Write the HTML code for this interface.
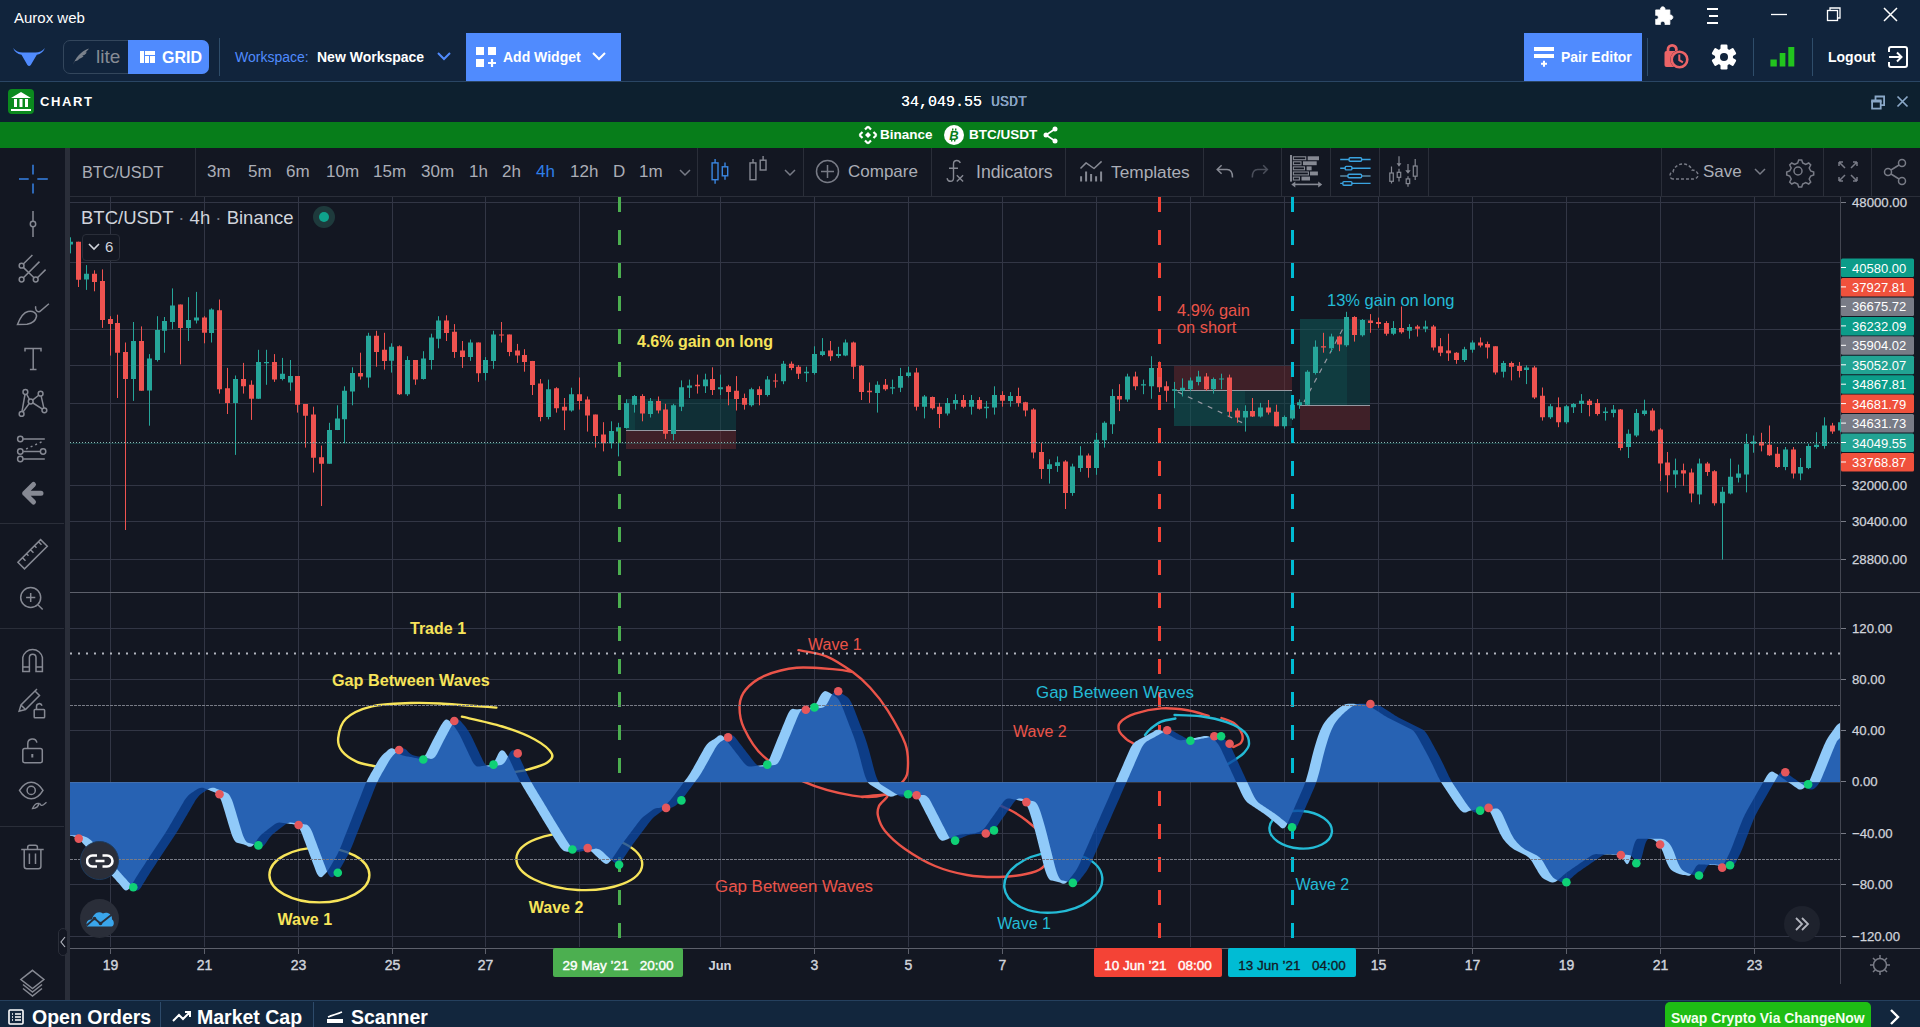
<!DOCTYPE html>
<html><head><meta charset="utf-8"><title>Aurox web</title>
<style>
*{box-sizing:border-box;margin:0;padding:0}
html,body{width:1920px;height:1027px;overflow:hidden;background:#131722;font-family:"Liberation Sans",sans-serif;color:#fff}
.a{position:absolute}
#title{left:0;top:0;width:1920px;height:33px;background:#11243c}
#nav{left:0;top:33px;width:1920px;height:49px;background:#11243c;border-bottom:1px solid #2a4664}
#chd{left:0;top:82px;width:1920px;height:40px;background:#0d202f}
#gbar{left:0;top:122px;width:1920px;height:26px;background:#077d1a}
#tb{left:70px;top:148px;width:1850px;height:49px;background:#131722;border-bottom:1px solid #2a2e39}
#side{left:0;top:148px;width:65px;height:852px;background:#131722}
#sdiv{left:65px;top:148px;width:5px;height:852px;background:#2a2e39}
#bot{left:0;top:1000px;width:1920px;height:27px;background:#12263d;border-top:1px solid #25405e}
.sep{position:absolute;width:1px;background:#2a2e39}
.nsep{position:absolute;width:1px;background:#2f4d6a;top:38px;height:38px}
.tf{position:absolute;top:161px;font-size:17px;color:#abaeb7;line-height:22px}
svg text{font-family:"Liberation Sans",sans-serif}
.ic{position:absolute}
</style></head><body>
<div id="title" class="a"></div>
<div class="a" style="left:14px;top:9px;font-size:15px;color:#fff;line-height:17px">Aurox web</div>
<!-- window icons -->
<svg class="a" style="left:1650px;top:4px" width="270" height="24" viewBox="1650 4 270 24">
 <path d="M1655.7,9.9H1660.6A2.3,2.3 0 1 1 1664.9,9.9H1669.9V15.1A2.3,2.3 0 1 1 1669.9,19.5V24.4H1664.9A2.3,2.3 0 1 0 1660.6,24.4H1655.7V19.2A2,2 0 1 0 1655.7,15.4Z" fill="#fff" stroke="#fff" stroke-width="0.8" stroke-linejoin="round"/>
 <path d="M1707,9h11M1709,16h9M1707,23h11" stroke="#fff" stroke-width="2"/>
 <path d="M1771,14.5h16" stroke="#fff" stroke-width="1.3"/>
 <rect x="1827.5" y="10.5" width="10" height="10" fill="none" stroke="#fff" stroke-width="1.3"/><path d="M1830,10.5v-2.5h10v10h-2.5" fill="none" stroke="#fff" stroke-width="1.3"/>
 <path d="M1884,8l13,13M1897,8l-13,13" stroke="#fff" stroke-width="1.5"/>
</svg>
<div id="nav" class="a"></div>
<!-- logo -->
<svg class="a" style="left:0;top:40px" width="60" height="32" viewBox="0 40 60 32"><path d="M13,48 Q17,52.5 22.5,52.5 L35.5,52.5 Q41,52.5 45,48 Q42.5,53.8 36.8,54.8 L30.8,65 Q29.1,67.2 27.4,65 L21.5,54.8 Q15.5,53.8 13,48Z" fill="#508bfe"/></svg>
<div class="a" style="left:63px;top:40px;width:146px;height:34px;border:1px solid #33465c;border-radius:7px"></div>
<div class="a" style="left:128px;top:40px;width:81px;height:34px;background:#508bfe;border-radius:0 7px 7px 0"></div>
<svg class="a" style="left:60px;top:40px" width="40" height="32" viewBox="60 40 40 32"><path d="M72.8,65 C75.5,58.5 80.5,51.5 88.8,48.6 C88,50.2 86.8,51.4 85.5,52.2 L86.8,52.4 C85.5,54.2 84,55.2 82.2,55.8 L83.6,56.2 C82,57.8 80.2,58.6 78.2,59 L79,59.6 C77.4,60.8 76,61.2 74.6,61.4 C74,62.6 73.4,63.8 72.8,65Z" fill="#7a818b"/></svg>
<div class="a" style="left:96px;top:46px;font-size:19px;color:#868c95;line-height:22px">lite</div>
<svg class="a" style="left:140px;top:51px" width="16" height="12" viewBox="0 0 16 12"><path d="M0,0h4v12h-4z M5,0h10v4h-10z M5,5h4v7h-4z M10,5h5v7h-5z" fill="#fff"/></svg>
<div class="a" style="left:162px;top:47px;font-size:16px;font-weight:bold;color:#fff;line-height:22px">GRID</div>
<div class="nsep" style="left:219px"></div>
<div class="a" style="left:235px;top:49px;font-size:14px;color:#508bfe;line-height:17px">Workspace:</div>
<div class="a" style="left:317px;top:49px;font-size:14px;font-weight:bold;color:#fff;line-height:17px">New Workspace</div>
<svg class="a" style="left:437px;top:51px" width="14" height="10"><path d="M1,2l6,6l6,-6" stroke="#508bfe" stroke-width="2" fill="none"/></svg>
<div class="a" style="left:466px;top:33px;width:155px;height:48px;background:#508bfe"></div>
<svg class="a" style="left:476px;top:47px" width="22" height="22" viewBox="0 0 22 22"><path d="M0,0h8v8h-8z M12,0h8v8h-8z M0,12h8v8h-8z" fill="#fff"/><path d="M16,12v8M12,16h8" stroke="#fff" stroke-width="2.2"/></svg>
<div class="a" style="left:503px;top:49px;font-size:14px;font-weight:bold;color:#fff;line-height:17px">Add Widget</div>
<svg class="a" style="left:592px;top:51px" width="14" height="10"><path d="M1,2l6,6l6,-6" stroke="#fff" stroke-width="2" fill="none"/></svg>
<!-- right nav -->
<div class="a" style="left:1524px;top:33px;width:118px;height:48px;background:#508bfe"></div>
<svg class="a" style="left:1532px;top:45px" width="24" height="24" viewBox="1532 45 24 24"><path d="M1534,47h20v4h-20z M1534,54h20v4h-20z" fill="#fff"/><path d="M1544,60.8v6M1541,63.8h6" stroke="#fff" stroke-width="2"/></svg>
<div class="a" style="left:1561px;top:49px;font-size:14px;font-weight:bold;color:#fff;line-height:17px">Pair Editor</div>
<div class="nsep" style="left:1647px"></div>
<svg class="a" style="left:1660px;top:40px" width="35" height="32" viewBox="1660 40 35 32"><path d="M1668,52v-2.5a4.2,4.2 0 0 1 8.4,0v2.5" stroke="#ec6467" stroke-width="2.8" fill="none"/><rect x="1664.5" y="51" width="14" height="16" rx="2" fill="#ec6467"/><circle cx="1679.5" cy="59.5" r="9.2" fill="#11243c"/><circle cx="1679.5" cy="59.5" r="7.8" fill="none" stroke="#ec6467" stroke-width="2.6"/><path d="M1679.3,54.6v5.6l3.6,2.2" stroke="#ec6467" stroke-width="2" fill="none"/></svg>
<svg class="a" style="left:1711px;top:44px" width="26" height="26" viewBox="-13 -13 26 26"><g fill="#fff"><circle r="9"/><rect x="-3.5" y="-12.5" width="7" height="25" rx="1.2"/><rect x="-3.5" y="-12.5" width="7" height="25" rx="1.2" transform="rotate(60)"/><rect x="-3.5" y="-12.5" width="7" height="25" rx="1.2" transform="rotate(120)"/></g><circle r="4" fill="#11243c"/></svg>
<div class="nsep" style="left:1753px"></div>
<svg class="a" style="left:1770px;top:46px" width="26" height="22" viewBox="1770 46 26 22"><path d="M1770.4,59.5h6.4v7.1h-6.4z M1779.7,53h5.7v13.6h-5.7z M1788.3,47h6v19.6h-6z" fill="#22c41e"/></svg>
<div class="nsep" style="left:1812px"></div>
<div class="a" style="left:1828px;top:49px;font-size:14px;font-weight:bold;color:#fff;line-height:17px">Logout</div>
<svg class="a" style="left:1886px;top:45px" width="24" height="24" viewBox="0 0 24 24"><path d="M3,7v-3a2,2 0 0 1 2,-2h14a2,2 0 0 1 2,2v16a2,2 0 0 1 -2,2h-14a2,2 0 0 1 -2,-2v-3" stroke="#fff" stroke-width="2" fill="none"/><path d="M3,12h12M11,7.5l4.5,4.5l-4.5,4.5" stroke="#fff" stroke-width="2" fill="none"/></svg>

<!-- chart header -->
<div id="chd" class="a"></div>
<svg class="a" style="left:8px;top:89px" width="26" height="25" viewBox="0 0 26 25"><rect width="26" height="25" rx="4" fill="#0b8a1e"/><path d="M3,9 L13,3 L23,9z M3,20h20v2h-20z" fill="#fff"/><path d="M6,10h3v8h-3z M11.5,10h3v8h-3z M17,10h3v8h-3z" fill="#fff"/></svg>
<div class="a" style="left:40px;top:94px;font-size:13px;font-weight:bold;color:#fff;letter-spacing:1.6px;line-height:15px">CHART</div>
<div class="a" style="left:901px;top:95px;font-size:15px;font-family:'Liberation Mono',monospace;color:#ffffff;text-shadow:0 0 0.4px #fff;line-height:16px">34,049.55 <span style="color:#7b9cc4">USDT</span></div>
<svg class="a" style="left:1868px;top:93px" width="46" height="18" viewBox="1868 93 46 18"><rect x="1872.1" y="100.4" width="8.6" height="8.2" fill="none" stroke="#8aa8c8" stroke-width="1.8"/><path d="M1871.2,101.6h10.4" stroke="#8aa8c8" stroke-width="1.8"/><path d="M1875.5,100v-3.5h8.6v8.6h-3.4" fill="none" stroke="#8aa8c8" stroke-width="1.8"/><path d="M1897.5,96.5l10,10M1907.5,96.5l-10,10" stroke="#8aa8c8" stroke-width="1.7"/></svg>
<div id="gbar" class="a"></div>
<svg class="a" style="left:858px;top:125px" width="20" height="20" viewBox="0 0 20 20"><path d="M10,1.5l3,3M10,1.5l-3,3M18.5,10l-3,3M18.5,10l-3,-3M10,18.5l3,-3M10,18.5l-3,-3M1.5,10l3,3M1.5,10l3,-3" stroke="#fff" stroke-width="2.2" fill="none"/><path d="M10,7l3,3l-3,3l-3,-3z" fill="#fff"/></svg>
<div class="a" style="left:880px;top:127px;font-size:13.5px;font-weight:bold;color:#fff;line-height:16px">Binance</div>
<svg class="a" style="left:943px;top:124px" width="22" height="22" viewBox="0 0 22 22"><circle cx="11" cy="11" r="10" fill="#fff"/><text x="11" y="16" text-anchor="middle" font-size="13" font-weight="bold" font-style="italic" fill="#077d1a" font-family="Liberation Sans">B</text><path d="M10,4.5l-0.5,2M13,4.5l-0.5,2M9,15.5l-0.5,2M12,15.5l-0.5,2" stroke="#077d1a" stroke-width="1.3"/></svg>
<div class="a" style="left:969px;top:127px;font-size:13.5px;font-weight:bold;color:#fff;line-height:16px">BTC/USDT</div>
<svg class="a" style="left:1043px;top:126px" width="16" height="18" viewBox="0 0 16 18"><circle cx="12" cy="3" r="2.5" fill="#fff"/><circle cx="3" cy="9" r="2.5" fill="#fff"/><circle cx="12" cy="15" r="2.5" fill="#fff"/><path d="M12,3L3,9L12,15" stroke="#fff" stroke-width="1.6" fill="none"/></svg>

<!-- toolbar -->
<div id="tb" class="a"></div>
<div id="side" class="a"></div>
<div id="sdiv" class="a"></div>
<div class="tf" style="left:82px;font-size:16.3px">BTC/USDT</div>
<div class="sep" style="left:195px;top:148px;height:49px"></div>
<div class="tf" style="left:207px">3m</div>
<div class="tf" style="left:248px">5m</div>
<div class="tf" style="left:286px">6m</div>
<div class="tf" style="left:326px">10m</div>
<div class="tf" style="left:373px">15m</div>
<div class="tf" style="left:421px">30m</div>
<div class="tf" style="left:469px">1h</div>
<div class="tf" style="left:502px">2h</div>
<div class="tf" style="left:536px;color:#2f7fe8">4h</div>
<div class="tf" style="left:570px">12h</div>
<div class="tf" style="left:613px">D</div>
<div class="tf" style="left:639px">1m</div>
<svg class="a" style="left:0;top:148px" width="1920" height="49" viewBox="0 148 1920 49">
 <g fill="none" stroke="#787b86" stroke-width="1.5">
  <path d="M680,170l5,5l5,-5M785,170l5,5l5,-5"/>
 </g>
 <g stroke="#3a86e0" stroke-width="1.4" fill="none"><path d="M715.1,159v4M715.1,179.7v4M725,162.5v4.3M725,175.8v3.9"/><rect x="712.1" y="162.9" width="5.9" height="16.8"/><rect x="722.3" y="166.8" width="5.4" height="9"/></g>
 <g stroke="#868993" stroke-width="1.4" fill="none"><rect x="750" y="162.9" width="5.9" height="16.8"/><path d="M753,159v3.9M763.1,155.9v4.3"/><rect x="760.2" y="160.2" width="5.8" height="9.8"/></g>
 <g stroke="#787b86" stroke-width="1.5" fill="none"><circle cx="827.5" cy="171.5" r="11"/><path d="M827.5,165v13M821,171.5h13"/></g>
 <g stroke="#868993" stroke-width="1.4" fill="none"><path d="M960.3,163.1C959.5,161 958,160.5 956.8,160.5C955,160.5 953.5,161.8 953.5,164V177.9C953.5,180.5 952,181.3 950.4,181.3C948.8,181.3 947.5,180 947,178.2M949,168.3h9M956.8,175.3l6.3,6.3M963.1,175.3l-6.3,6.3"/></g>
 <g stroke="#868993" stroke-width="1.5" fill="none" stroke-linejoin="round"><path d="M1080.5,168.5L1086.1,162.9L1094,168.5L1101.6,161.4"/><path d="M1081.1,176.2v5.2M1086.1,171.4v10M1091.1,174v7.4M1096.1,176.2v5.2M1101.1,171.4v10" stroke-width="2"/></g>
 <g stroke="#868993" stroke-width="1.5" fill="none"><path d="M1221.6,165.2L1217.2,169.5L1221.6,173.7M1217.2,169.5H1227C1230.5,169.5 1232.5,172 1232.5,177.5"/></g>
 <g stroke="#4a4e5a" stroke-width="1.5" fill="none"><path d="M1263.2,165.2L1267.4,169.5L1263.2,173.7M1267.4,169.5H1257.7C1254.3,169.5 1252.3,172 1252.3,177.5"/></g>
 <g fill="#868993"><rect x="1290" y="155" width="2" height="26.6"/><rect x="1307.7" y="156.3" width="11.3" height="3.9"/><rect x="1303" y="161.3" width="13.7" height="3.9"/><rect x="1306.6" y="166.4" width="5" height="3.9"/><rect x="1310" y="171.5" width="7.9" height="3.9"/><rect x="1301.5" y="176.6" width="8.5" height="3.9"/><path d="M1291.3,184.4l4,-3v6z M1322.2,184.4l-4,-3v6z"/></g>
 <g stroke="#868993" stroke-width="1.1" fill="none"><rect x="1293.4" y="156.8" width="12.3" height="2.9"/><rect x="1293.4" y="161.8" width="7.6" height="2.9"/><rect x="1293.4" y="166.9" width="11.1" height="2.9"/><rect x="1293.4" y="172" width="15" height="2.9"/><rect x="1293.4" y="177.1" width="6" height="2.9"/><path d="M1294,184.4h25.5" stroke-width="1.6"/></g>
 <g stroke="#3aa3e0" stroke-width="1.4" fill="none"><path d="M1340.2,159.5h9M1361.6,159.5h9M1340.2,168.2h5M1351.9,168.2h18.7M1340.2,183.4h2.7M1351.9,183.4h18.7"/><path d="M1340.2,176h7.8M1361.6,176h9" stroke="#5a8aa6"/><rect x="1349.1" y="157.8" width="12.5" height="3.5" rx="1"/><rect x="1345.2" y="166.4" width="6.7" height="3.5" rx="1"/><rect x="1348" y="174.2" width="13.6" height="3.5" rx="1"/><rect x="1342.9" y="181.6" width="9" height="3.6" rx="1"/></g>
 <g stroke="#868993" stroke-width="1.2" fill="none"><path d="M1391.5,166.4v6.6M1391.5,181.3v2.3M1399,168.8v3.5M1399,177.3v4.3M1408,176.2v2.7M1408,183.6v3.1M1415.2,159v7M1415.2,176.2v3.8M1399,156.3v7.5M1408,164v6.8"/><rect x="1389.8" y="173" width="3.5" height="8.3"/><rect x="1397.2" y="172.3" width="3.5" height="5"/><rect x="1406.2" y="178.9" width="3.5" height="4.7"/><rect x="1413.3" y="166" width="3.8" height="10.2"/></g>
 <path d="M1396.6,163.3h4.8l-2.4,3.5z M1405.3,170.3h5.4l-2.7,3.5z" fill="#868993"/>
 <g stroke="#787b86" stroke-width="1.5" fill="none" stroke-dasharray="3 2"><path d="M1673,179c-4,0 -4,-7 0,-7c1,-5 5,-8 10,-8c5,0 8,3 9,6c4,0 6,3 6,5c0,3 -3,4 -5,4h-20z"/></g>
 <g stroke="#787b86" stroke-width="1.5" fill="none"><path d="M1755,169l5,5l5,-5"/></g>
 <g stroke="#787b86" stroke-width="1.5" fill="none"><circle cx="1798" cy="171" r="4"/><path d="M1798,160.5l2.5,0l1,3l3,1.5l3,-1.5l2,2l-1.5,3l1.5,3l3,1l0,3l-3,1l-1.5,3l1.5,3l-2,2l-3,-1.5l-3,1.5l-1,3h-3l-1,-3l-3,-1.5l-3,1.5l-2,-2l1.5,-3l-1.5,-3l-3,-1v-3l3,-1l1.5,-3l-1.5,-3l2,-2l3,1.5l3,-1.5l1,-3z" transform="translate(1.2 -0.5)"/></g>
 <g stroke="#787b86" stroke-width="1.5" fill="none"><path d="M1839,162l6,6M1839,162h4M1839,162v4M1857,162l-6,6M1857,162h-4M1857,162v4M1839,181l6,-6M1839,181h4M1839,181v-4M1857,181l-6,-6M1857,181h-4M1857,181v-4"/></g>
 <g stroke="#787b86" stroke-width="1.5" fill="none"><circle cx="1902" cy="163" r="3.5"/><circle cx="1888" cy="172" r="3.5"/><circle cx="1902" cy="181" r="3.5"/><path d="M1899,165l-8,5M1899,179l-8,-5"/></g>
</svg>
<div class="tf" style="left:848px">Compare</div>
<div class="tf" style="left:976px;font-size:17.7px">Indicators</div>
<div class="tf" style="left:1111px;font-size:17.3px">Templates</div>
<div class="tf" style="left:1703px">Save</div>
<div class="sep" style="left:697px;top:148px;height:49px"></div>
<div class="sep" style="left:803px;top:148px;height:49px"></div>
<div class="sep" style="left:931px;top:148px;height:49px"></div>
<div class="sep" style="left:1065px;top:148px;height:49px"></div>
<div class="sep" style="left:1203px;top:148px;height:49px"></div>
<div class="sep" style="left:1281px;top:148px;height:49px"></div>
<div class="sep" style="left:1330px;top:148px;height:49px"></div>
<div class="sep" style="left:1379px;top:148px;height:49px"></div>
<div class="sep" style="left:1428px;top:148px;height:49px"></div>
<div class="sep" style="left:1661px;top:148px;height:49px"></div>
<div class="sep" style="left:1774px;top:148px;height:49px"></div>
<div class="sep" style="left:1823px;top:148px;height:49px"></div>
<div class="sep" style="left:1871px;top:148px;height:49px"></div>

<!-- chart svg -->
<svg class="a" style="left:0;top:0" width="1920" height="1000" viewBox="0 0 1920 1000">
<defs><clipPath id="cp"><rect x="70" y="197" width="1850" height="803"/></clipPath></defs>
<g clip-path="url(#cp)">
<line x1="110.5" y1="197" x2="110.5" y2="947" stroke="#323645" stroke-width="1"/>
<line x1="204.5" y1="197" x2="204.5" y2="947" stroke="#323645" stroke-width="1"/>
<line x1="298.5" y1="197" x2="298.5" y2="947" stroke="#323645" stroke-width="1"/>
<line x1="392.5" y1="197" x2="392.5" y2="947" stroke="#323645" stroke-width="1"/>
<line x1="485.5" y1="197" x2="485.5" y2="947" stroke="#323645" stroke-width="1"/>
<line x1="579.5" y1="197" x2="579.5" y2="947" stroke="#323645" stroke-width="1"/>
<line x1="720.5" y1="197" x2="720.5" y2="947" stroke="#323645" stroke-width="1"/>
<line x1="814.5" y1="197" x2="814.5" y2="947" stroke="#323645" stroke-width="1"/>
<line x1="908.5" y1="197" x2="908.5" y2="947" stroke="#323645" stroke-width="1"/>
<line x1="1002.5" y1="197" x2="1002.5" y2="947" stroke="#323645" stroke-width="1"/>
<line x1="1096.5" y1="197" x2="1096.5" y2="947" stroke="#323645" stroke-width="1"/>
<line x1="1190.5" y1="197" x2="1190.5" y2="947" stroke="#323645" stroke-width="1"/>
<line x1="1284.5" y1="197" x2="1284.5" y2="947" stroke="#323645" stroke-width="1"/>
<line x1="1378.5" y1="197" x2="1378.5" y2="947" stroke="#323645" stroke-width="1"/>
<line x1="1472.5" y1="197" x2="1472.5" y2="947" stroke="#323645" stroke-width="1"/>
<line x1="1566.5" y1="197" x2="1566.5" y2="947" stroke="#323645" stroke-width="1"/>
<line x1="1660.5" y1="197" x2="1660.5" y2="947" stroke="#323645" stroke-width="1"/>
<line x1="1754.5" y1="197" x2="1754.5" y2="947" stroke="#323645" stroke-width="1"/>
<line x1="70" y1="202.5" x2="1840" y2="202.5" stroke="#323645" stroke-width="1"/>
<line x1="70" y1="262.5" x2="1840" y2="262.5" stroke="#323645" stroke-width="1"/>
<line x1="70" y1="329.5" x2="1840" y2="329.5" stroke="#323645" stroke-width="1"/>
<line x1="70" y1="365.5" x2="1840" y2="365.5" stroke="#323645" stroke-width="1"/>
<line x1="70" y1="403.5" x2="1840" y2="403.5" stroke="#323645" stroke-width="1"/>
<line x1="70" y1="485.5" x2="1840" y2="485.5" stroke="#323645" stroke-width="1"/>
<line x1="70" y1="521.5" x2="1840" y2="521.5" stroke="#323645" stroke-width="1"/>
<line x1="70" y1="559.5" x2="1840" y2="559.5" stroke="#323645" stroke-width="1"/>
<line x1="70" y1="628.5" x2="1840" y2="628.5" stroke="#323645" stroke-width="1"/>
<line x1="70" y1="679.5" x2="1840" y2="679.5" stroke="#323645" stroke-width="1"/>
<line x1="70" y1="730.5" x2="1840" y2="730.5" stroke="#323645" stroke-width="1"/>
<line x1="70" y1="833.5" x2="1840" y2="833.5" stroke="#323645" stroke-width="1"/>
<line x1="70" y1="884.5" x2="1840" y2="884.5" stroke="#323645" stroke-width="1"/>
<line x1="70" y1="936.5" x2="1840" y2="936.5" stroke="#323645" stroke-width="1"/>
<line x1="70" y1="592.5" x2="1920" y2="592.5" stroke="#5d606b" stroke-width="1"/>
<line x1="1840.5" y1="197" x2="1840.5" y2="984" stroke="#434651" stroke-width="1"/>
<line x1="70" y1="948.5" x2="1920" y2="948.5" stroke="#5d606b" stroke-width="1"/>
<rect x="626" y="399" width="110" height="31" fill="#0d474a" fill-opacity="0.5"/>
<rect x="626" y="399" width="9" height="31" fill="#0f9d8a" fill-opacity="0.12"/>
<rect x="626" y="431" width="110" height="18" fill="#6b292e" fill-opacity="0.5"/>
<line x1="626" y1="430.5" x2="736" y2="430.5" stroke="#9598a1" stroke-width="1"/>
<rect x="1174" y="366" width="118" height="24" fill="#6b292e" fill-opacity="0.5"/>
<rect x="1174" y="391" width="118" height="35" fill="#0d474a" fill-opacity="0.5"/>
<rect x="1174" y="391" width="71" height="35" fill="#0f9d8a" fill-opacity="0.12"/>
<line x1="1174" y1="390.5" x2="1292" y2="390.5" stroke="#9598a1" stroke-width="1"/>
<line x1="1178" y1="392" x2="1245" y2="424" stroke="#9598a1" stroke-width="1.2" stroke-dasharray="5 6"/>
<rect x="1300" y="319" width="70" height="86" fill="#0d474a" fill-opacity="0.5"/>
<rect x="1300" y="319" width="47" height="86" fill="#0f9d8a" fill-opacity="0.12"/>
<rect x="1300" y="406" width="70" height="24" fill="#6b292e" fill-opacity="0.5"/>
<line x1="1300" y1="405.5" x2="1370" y2="405.5" stroke="#9598a1" stroke-width="1"/>
<line x1="1304" y1="402" x2="1347" y2="321" stroke="#9598a1" stroke-width="1.2" stroke-dasharray="5 6"/>
<path d="M70.5,237.3V253.4M86.5,265.1V289.9M133.5,322V400.9M149.5,354.1V425.7M157.5,316.2V361.5M164.5,317V352.7M172.5,288.4V329.3M188.5,297.2V341M196.5,291.9V323.5M211.5,308.3V342.5M235.5,375.5V454.9M258.5,349.8V398.8M266.5,349.8V384.8M282.5,357.9V380.4M290.5,360V390.7M329.5,422.8V463.7M337.5,405.3V430.1M344.5,386.3V443.2M352.5,367.3V405.3M368.5,332.8V387.7M391.5,343.3V372.6M407.5,356.2V395.9M423.5,351.2V379.6M431.5,333.7V369.6M438.5,316.2V348.3M470.5,339.5V360.9M485.5,357.1V380.4M493.5,330.8V368.8M548.5,379.6V419.3M571.5,387.7V411.7M611.5,421.3V448.5M618.5,422.8V456.4M626.5,399.4V428.6M634.5,395V412.6M650.5,398V417.5M673.5,403.8V440.3M681.5,380.4V411.1M689.5,379.6V398M705.5,373.7V393M720.5,374.6V395M751.5,387.7V406.7M767.5,376.1V396.5M783.5,360.9V384.2M806.5,366.7V381.9M814.5,346.3V374.6M822.5,338.1V356.2M838.5,346.8V357.9M845.5,339.5V356.2M877.5,381.3V412.6M892.5,379.6V394.2M900.5,367.9V392.1M908.5,366.7V377.5M924.5,395V418.4M947.5,398V415.5M955.5,394.2V409.6M971.5,395V414.6M986.5,400.9V418.4M994.5,386.3V414.6M1010.5,392.1V406.7M1049.5,459.3V483.6M1057.5,456.4V471.9M1072.5,463.7V495.8M1080.5,446.2V471.9M1096.5,433V474.8M1104.5,421.3V447.6M1112.5,389.2V433.9M1127.5,373.7V401.8M1143.5,379.6V394.2M1151.5,356.2V398.8M1174.5,381.9V408.2M1182.5,378.4V396.5M1190.5,377.5V391.2M1198.5,370.8V385.4M1213.5,377.5V393.6M1221.5,373.7V389.2M1245.5,405.3V431.6M1260.5,402.9V417.5M1284.5,415.5V428.6M1292.5,402.3V419.9M1299.5,399.4V408.8M1307.5,370.2V405.3M1315.5,340.4V374.6M1331.5,333.7V352.1M1346.5,311.8V346.8M1362.5,319.1V336.6M1393.5,321.1V335.2M1409.5,324.1V338.7M1425.5,320.6V332.2M1464.5,346.8V362M1472.5,340.4V352.7M1503.5,360.9V377.5M1526.5,365.3V384.1M1550.5,404V418.9M1566.5,405V423.9M1573.5,403V413M1581.5,394.1V413M1605.5,407.3V420.6M1613.5,405V417.3M1628.5,429.5V458M1636.5,409V437.1M1644.5,399.7V415.6M1675.5,458.6V487.8M1699.5,458.6V504.3M1722.5,486.8V559.6M1730.5,458.6V494.4M1738.5,464.6V482.5M1746.5,433.8V492.4M1753.5,435.5V452.7M1785.5,447V470.2M1800.5,458V480.2M1808.5,443.7V469.2M1816.5,432.2V448.7M1824.5,417.3V448.7M1840.5,418.9V432.2" stroke="#26a69a" stroke-width="1" fill="none"/>
<path d="M68,241.7h5v2.9h-5zM84,273.8h5v5.8h-5zM131,341h5v38h-5zM147,358.5h5v32.1h-5zM155,329.9h5v30.1h-5zM162,321.1h5v9.6h-5zM170,305.4h5v16.7h-5zM186,320h5v7.9h-5zM194,317.6h5v2.9h-5zM209,309.5h5v23.4h-5zM233,379h5v24h-5zM256,362h5v36.8h-5zM264,362h5v1.2h-5zM280,373.7h5v5.3h-5zM288,376.1h5v6.4h-5zM327,430.1h5v33.6h-5zM335,418.4h5v11.7h-5zM342,390.7h5v28.6h-5zM350,373.1h5v18.4h-5zM366,335.7h5v41.8h-5zM389,346.8h5v14h-5zM405,360h5v34.2h-5zM421,358.5h5v20.4h-5zM429,337.5h5v22.5h-5zM436,320.6h5v18.1h-5zM468,342.5h5v14.6h-5zM483,360h5v13.1h-5zM491,334.6h5v26.3h-5zM546,389.2h5v27.8h-5zM569,394.2h5v16.4h-5zM609,431h5v12.3h-5zM616,427.2h5v4.4h-5zM624,402.9h5v25.1h-5zM632,395.9h5v8.8h-5zM648,400.9h5v13.1h-5zM671,405.3h5v28.6h-5zM679,387.2h5v19.6h-5zM687,385.4h5v2.3h-5zM703,379.6h5v6.7h-5zM718,387.2h5v2h-5zM749,389.2h5v16.1h-5zM765,379.6h5v15.5h-5zM781,363.8h5v17.5h-5zM804,371.7h5v1.5h-5zM812,354.1h5v19h-5zM820,351.2h5v3.8h-5zM836,354.1h5v2h-5zM843,342.5h5v13.1h-5zM875,384.8h5v8.2h-5zM890,387.2h5v1.2h-5zM898,376.1h5v11.7h-5zM906,372.6h5v3.5h-5zM922,396.5h5v10.2h-5zM945,402.9h5v10.5h-5zM953,400h5v3.8h-5zM969,400h5v6.7h-5zM984,406.7h5v1.5h-5zM992,395h5v12.6h-5zM1008,395.9h5v5h-5zM1047,464.3h5v4.7h-5zM1055,462.2h5v3.8h-5zM1070,466.6h5v26.3h-5zM1078,455.5h5v12.6h-5zM1094,439.7h5v28.3h-5zM1102,422.8h5v17.5h-5zM1110,395.9h5v28.3h-5zM1125,376.6h5v22.8h-5zM1141,384.2h5v1.2h-5zM1149,367.9h5v18.4h-5zM1172,389.2h5v1.5h-5zM1180,387.7h5v2.9h-5zM1188,380.4h5v8.8h-5zM1196,376.6h5v5.3h-5zM1211,379h5v10.2h-5zM1219,378.4h5v1.2h-5zM1243,411.1h5v6.4h-5zM1258,407.6h5v8.8h-5zM1282,417h5v9.3h-5zM1290,404.7h5v13.7h-5zM1297,402.3h5v2.9h-5zM1305,371.7h5v33h-5zM1313,346.8h5v26.3h-5zM1329,336.6h5v11.7h-5zM1344,317h5v28.3h-5zM1360,320h5v15.2h-5zM1391,327.9h5v5.8h-5zM1407,327h5v3.8h-5zM1423,326.4h5v2.3h-5zM1462,349.2h5v10.8h-5zM1470,342.5h5v7.3h-5zM1501,362.9h5v8.8h-5zM1524,367.6h5v2.3h-5zM1548,406.3h5v10.9h-5zM1564,406.3h5v15.9h-5zM1571,404h5v3.3h-5zM1579,400.7h5v3.3h-5zM1603,411.6h5v1.3h-5zM1611,409.6h5v3.3h-5zM1626,433.8h5v13.2h-5zM1634,413h5v22.5h-5zM1642,410.6h5v3.3h-5zM1673,470.2h5v4.3h-5zM1697,463.6h5v30.8h-5zM1720,491.7h5v11.6h-5zM1728,476.8h5v16.6h-5zM1736,473.5h5v4.3h-5zM1744,443.7h5v30.8h-5zM1751,441.4h5v2.3h-5zM1783,449.4h5v17.5h-5zM1798,466.9h5v6.6h-5zM1806,446.1h5v21.9h-5zM1814,444.7h5v2.3h-5zM1822,425.5h5v20.5h-5zM1838,422.2h5v8.3h-5z" fill="#26a69a"/>
<path d="M78.5,241.7V287M94.5,270.3V291.3M102.5,269.4V327.9M110.5,316.2V355.6M117.5,314.7V398M125.5,342.5V530M141.5,326.4V390.7M180.5,304.5V364.4M204.5,316.2V343.3M219.5,299.5V393.6M227.5,367.9V414M243.5,362.9V393.6M251.5,380.4V419.9M274.5,354.1V381.9M297.5,376.1V412.6M305.5,404.1V447.6M313.5,406.7V472.5M321.5,445.6V506M360.5,352.7V379.6M376.5,330.8V366.7M384.5,332.8V369.6M399.5,345.4V395M415.5,360V384.8M446.5,315.3V341M454.5,324.1V357.9M462.5,341V367.9M478.5,342.5V381.9M501.5,322V342.5M509.5,334.6V356.2M517.5,343.9V362.9M524.5,349.2V371.7M532.5,360.9V395M540.5,379V421.3M556.5,387.2V412.6M564.5,398V430.1M579.5,377.5V409.6M587.5,396.5V431.6M595.5,414.6V447.6M603.5,422.2V451.4M642.5,394.2V421.3M658.5,396.5V413.4M665.5,403.8V438.9M697.5,374.6V393.6M712.5,367.3V395M728.5,384.8V405.3M736.5,376.1V410.5M744.5,393.6V409.6M759.5,386.3V405.3M775.5,373.7V387.7M791.5,361.5V370.2M798.5,365V379M830.5,341V360.9M853.5,341.6V379M861.5,365V400M869.5,382.5V402.9M885.5,379V390.7M916.5,367.9V410.5M932.5,396.5V409.6M939.5,402.9V428.1M963.5,395V408.2M979.5,397.1V409.6M1002.5,391.2V406.7M1018.5,387.7V406.7M1025.5,401.8V416.4M1033.5,408.2V458.4M1041.5,442.7V478.9M1065.5,460.2V509M1088.5,453.5V477.7M1119.5,384.2V411.1M1135.5,371.7V390.1M1159.5,361.5V392.1M1166.5,381.3V401.8M1206.5,373.1V390.7M1229.5,374.6V417M1237.5,408.2V422.8M1252.5,398V417M1268.5,400V414.6M1276.5,404.7V426.3M1323.5,332.8V352.7M1339.5,335.7V351.2M1354.5,316.2V341.6M1370.5,314.1V332.8M1378.5,317.6V327.9M1386.5,321.1V335.7M1401.5,306.5V333.7M1417.5,324.9V336.6M1433.5,324.9V350.4M1440.5,338.1V356.2M1448.5,333.7V360.9M1456.5,352.1V363.8M1480.5,337.5V347.4M1487.5,341.6V358.5M1495.5,346.3V374.6M1511.5,361.5V380.4M1519.5,362V377.5M1534.5,365.9V399M1542.5,387.5V420.6M1558.5,397.4V427.2M1589.5,399V416.3M1597.5,399V415.6M1620.5,409V450.4M1652.5,408.3V431.5M1660.5,428.2V481.1M1667.5,452V492.4M1683.5,463.6V485.8M1691.5,468.6V502.3M1707.5,461.9V475.9M1714.5,470.2V505.6M1761.5,432.8V451.4M1769.5,425.5V456M1777.5,447V467.9M1793.5,447V478.5M1832.5,422.9V433.8" stroke="#ef5350" stroke-width="1" fill="none"/>
<path d="M76,241.7h5v38h-5zM92,273.8h5v8.2h-5zM100,281.1h5v38.9h-5zM108,319.1h5v5h-5zM115,322.9h5v29.8h-5zM123,352.1h5v26.9h-5zM139,341h5v49.7h-5zM178,304.5h5v23.4h-5zM202,317.6h5v15.2h-5zM217,310.3h5v78.9h-5zM225,388.3h5v14.6h-5zM241,379h5v7.3h-5zM249,384.8h5v14h-5zM272,362h5v17.5h-5zM295,376.1h5v28.6h-5zM303,404.1h5v11.7h-5zM311,414.6h5v43.2h-5zM319,457.3h5v6.4h-5zM358,373.1h5v3.5h-5zM374,335.7h5v16.4h-5zM382,349.8h5v11.1h-5zM397,346.3h5v47.9h-5zM413,360h5v19.6h-5zM444,320.6h5v12.3h-5zM452,331.7h5v20.4h-5zM460,350.6h5v6.4h-5zM476,342.5h5v30.7h-5zM499,334.6h5v1h-5zM507,334.6h5v17.5h-5zM515,350.6h5v5h-5zM522,355h5v7h-5zM530,360.9h5v24h-5zM538,383.4h5v33.6h-5zM554,388.3h5v19.9h-5zM562,406.7h5v3.8h-5zM577,394.2h5v6.7h-5zM585,399.4h5v16.1h-5zM593,414.6h5v21.3h-5zM601,434.5h5v8.8h-5zM640,395.9h5v17.5h-5zM656,400.9h5v9.6h-5zM663,409.6h5v24.2h-5zM695,384.8h5v1.5h-5zM710,379h5v11.1h-5zM726,386.3h5v5.8h-5zM734,390.7h5v8.2h-5zM742,398h5v6.7h-5zM757,389.2h5v5.8h-5zM773,380.4h5v1h-5zM789,363.8h5v4.1h-5zM796,366.7h5v7h-5zM828,350.4h5v5.8h-5zM851,342.5h5v24.2h-5zM859,365.8h5v26.3h-5zM867,390.7h5v1.5h-5zM883,384.8h5v4.4h-5zM914,372.6h5v34.2h-5zM930,397.1h5v11.1h-5zM937,406.7h5v7.3h-5zM961,400h5v6.7h-5zM977,400h5v8.8h-5zM1000,395h5v5.8h-5zM1016,395.9h5v7h-5zM1023,402.3h5v8.2h-5zM1031,409.6h5v42.9h-5zM1039,452h5v16.9h-5zM1063,461.4h5v31.5h-5zM1086,455.5h5v12.6h-5zM1117,395.9h5v3.5h-5zM1133,376.6h5v9.6h-5zM1157,367.9h5v19.3h-5zM1164,386.3h5v4.4h-5zM1204,376.6h5v12.6h-5zM1227,377.5h5v34.2h-5zM1235,410.5h5v7h-5zM1250,411.1h5v5.3h-5zM1266,407.6h5v5h-5zM1274,411.7h5v14.6h-5zM1321,346.3h5v1.2h-5zM1337,336.6h5v7.9h-5zM1352,317h5v18.1h-5zM1368,320.6h5v2.3h-5zM1376,322h5v2h-5zM1384,322.9h5v10.8h-5zM1399,328.1h5v4.1h-5zM1415,326.4h5v2.3h-5zM1431,326.4h5v21h-5zM1438,346.3h5v6.4h-5zM1446,350.4h5v2.9h-5zM1454,352.7h5v7.3h-5zM1478,342.5h5v2.9h-5zM1485,343.9h5v3.5h-5zM1493,346.3h5v26.3h-5zM1509,362.9h5v3.8h-5zM1517,365.9h5v5h-5zM1532,367.6h5v29.8h-5zM1540,395.7h5v21.5h-5zM1556,407.3h5v14.9h-5zM1587,400.7h5v4.3h-5zM1595,403h5v10.9h-5zM1618,409.6h5v38.4h-5zM1650,410.6h5v19.9h-5zM1658,429.5h5v34.1h-5zM1665,462.6h5v12.6h-5zM1681,470.2h5v3.3h-5zM1689,472.5h5v20.9h-5zM1705,463.6h5v8.3h-5zM1712,471.2h5v32.1h-5zM1759,442.1h5v3.3h-5zM1767,444.7h5v10.6h-5zM1775,453.7h5v13.2h-5zM1791,449.4h5v24.2h-5zM1830,425.5h5v6h-5z" fill="#ef5350"/>
<line x1="70" y1="443.5" x2="1840" y2="443.5" stroke="#26a69a" stroke-opacity="0.25" stroke-width="1"/>
<line x1="70" y1="442.5" x2="1840" y2="442.5" stroke="#8fb8b4" stroke-width="1" stroke-dasharray="1 2"/>
<line x1="619.5" y1="197" x2="619.5" y2="947" stroke="#4caf50" stroke-width="3" stroke-dasharray="15 18"/>
<line x1="1159.5" y1="197" x2="1159.5" y2="947" stroke="#f44336" stroke-width="3" stroke-dasharray="15 18"/>
<line x1="1292.5" y1="197" x2="1292.5" y2="947" stroke="#00bcd4" stroke-width="3" stroke-dasharray="15 18"/>
<ellipse cx="319.4" cy="875" rx="50" ry="27.4" fill="none" stroke="#f7e45a" stroke-width="2.4" transform="rotate(0 319.4 875)"/>
<ellipse cx="579.3" cy="861.5" rx="63" ry="28.5" fill="none" stroke="#f7e45a" stroke-width="2.4" transform="rotate(3 579.3 861.5)"/>
<path d="M496.4,707.6C487,706.9 454.2,704.3 440,703.5C425.8,702.7 422.4,702.5 411.1,703C399.8,703.5 382.9,703.7 372,706.3C361.1,708.9 351.6,713.3 346,718.6C340.4,723.9 338.8,732.8 338.2,738.2C337.6,743.6 339.1,747.3 342.1,751.2C345.2,755.1 351.6,759.2 356.5,761.6C361.4,764 366.6,764.4 371.4,765.5C376.1,766.6 382.7,767.6 385,768" fill="none" stroke="#f7e45a" stroke-width="2.4" stroke-linecap="round"/>
<path d="M461.9,716.7C468.6,718.3 490.2,722.7 502.3,726.5C514.5,730.3 526.5,735 534.8,739.5C543,744 549.8,749.9 551.8,753.8C553.8,757.7 550.5,760.3 546.6,762.9C542.7,765.5 533.6,767.9 528.3,769.4C523,770.9 517.2,771.6 515,772" fill="none" stroke="#f7e45a" stroke-width="2.4" stroke-linecap="round"/>
<path d="M798.4,650.2C803.1,651.2 817.3,652.6 826.4,656.3C835.5,659.9 845.4,666.9 852.7,672.1C860,677.4 864.4,681.4 870.2,687.8C876.1,694.2 881.9,701.2 887.8,710.6C893.6,720 901.9,734.5 905.3,743.9C908.6,753.2 908.2,760.6 907.9,766.7C907.6,772.8 907.5,776 903.5,780.7C899.5,785.4 892.7,792.3 884.2,794.8C875.7,797.3 866.1,797.8 852.7,795.6C839.3,793.4 818.5,788.2 803.6,781.6C788.7,775 773.2,765.1 763.3,756.2C753.4,747.3 748,736.7 744,728.2C740,719.7 739.3,711.8 739.6,705.4C739.9,699 741.5,694.6 745.8,689.6C750,684.6 756.6,679.2 765.1,675.6C773.6,672 784.9,668.7 796.6,667.7C808.3,666.7 825.9,668.7 835.2,669.4C844.6,670.1 849.8,671.6 852.7,672.1" fill="none" stroke="#eb5449" stroke-width="2.4" stroke-linecap="round"/>
<path d="M862,797C866.2,796.7 884.2,793.5 887,795C889.8,796.5 880.5,802.5 879,806C877.5,809.5 877,811.8 878,816C879,820.2 880.5,825.5 885,831C889.5,836.5 896.7,843.2 905,849C913.3,854.8 924.7,861.7 935,866C945.3,870.3 956.3,873.2 967,875C977.7,876.8 989.2,877.2 999,877C1008.8,876.8 1018.8,875.5 1026,874C1033.2,872.5 1038,871.2 1042,868C1046,864.8 1049.5,860 1050,855C1050.5,850 1048.8,843.7 1045,838C1041.2,832.3 1032.8,825.7 1027,821C1021.2,816.3 1017,813.5 1010,810C1003,806.5 995,803 985,800C975,797 962.5,793.5 950,792C937.5,790.5 920.5,790.5 910,791C899.5,791.5 890.8,794.3 887,795" fill="none" stroke="#eb5449" stroke-width="2.4" stroke-linecap="round"/>
<path d="M1208.7,715.9C1205.2,715 1195.5,711.5 1187.6,710.2C1179.7,709 1170,707.8 1161.3,708.4C1152.5,709 1141.9,711.4 1135.1,713.7C1128.2,716 1122.8,719.5 1120.2,722.4C1117.6,725.3 1118.3,728.4 1119.3,731.2C1120.3,734 1124,737.1 1126.3,739.1C1128.6,741.1 1131,742 1133.3,743.5C1135.6,745 1138.9,747.2 1140,748" fill="none" stroke="#eb5449" stroke-width="2.4" stroke-linecap="round"/>
<path d="M1221.4,718C1223.5,718.9 1230.7,720.7 1234.1,723.3C1237.5,725.9 1240.8,730.6 1242,733.8C1243.2,737 1242.6,740.4 1241.1,742.6C1239.6,744.8 1234.5,746.3 1233.2,747" fill="none" stroke="#eb5449" stroke-width="2.4" stroke-linecap="round"/>
<path d="M1174.5,715C1178.9,715.2 1192,715.1 1200.8,716.3C1209.6,717.5 1219.8,719.8 1227.1,722.4C1234.4,725 1240.9,728.5 1244.6,732.1C1248.2,735.8 1249.2,740.8 1249,744.3C1248.8,747.8 1245.9,750.6 1243.7,753.1C1241.5,755.6 1238.4,757.4 1235.8,759.2C1233.2,761 1229.3,763.2 1228,764" fill="none" stroke="#24bbd6" stroke-width="2.4" stroke-linecap="round"/>
<path d="M1175.4,718.5C1173.1,719 1165.4,719.9 1161.3,721.6C1157.2,723.3 1153.5,726.4 1150.8,728.6C1148.1,730.8 1146,733.9 1145,735" fill="none" stroke="#24bbd6" stroke-width="2.4" stroke-linecap="round"/>
<ellipse cx="1053.3" cy="882.5" rx="49.2" ry="30" fill="none" stroke="#24bbd6" stroke-width="2.4" transform="rotate(-6 1053.3 882.5)"/>
<ellipse cx="1300.7" cy="829.7" rx="31.3" ry="18.8" fill="none" stroke="#24bbd6" stroke-width="2.4" transform="rotate(4 1300.7 829.7)"/>
<path d="M70,782L70,835.7L71,835.9L72,836.1L73,836.3L74,836.7L75,837.1L76,837.6L77,838.1L78,838.7L79,839.5L80,840.3L81,841.2L82,842.3L83,843.4L84,844.5L85,845.6L86,846.8L87,847.9L88,849L89,850.1L90,851.2L91,852.3L92,853.5L93,854.6L94,855.7L95,856.8L96,857.9L97,859L98,860.2L99,861.3L100,862.4L101,863.5L102,864.6L103,865.7L104,866.9L105,868L106,869.1L107,870.2L108,871.3L109,872.4L110,873.6L111,874.7L112,875.8L113,876.9L114,878L115,879.1L116,880.3L117,881.4L118,882.5L119,883.6L120,884.8L121,885.9L122,887.2L123,888.4L124,889.5L125,890.2L126,890.5L127,890.3L128,889.8L129,888.8L130,887.4L131,885.8L132,884.1L133,882.5L134,880.9L135,879.2L136,877.6L137,876L138,874.4L139,872.8L140,871.2L141,869.7L142,868.2L143,866.7L144,865.2L145,863.7L146,862.1L147,860.6L148,859.1L149,857.6L150,856.1L151,854.6L152,853.1L153,851.6L154,850.1L155,848.6L156,847.1L157,845.6L158,844.1L159,842.6L160,841L161,839.5L162,838L163,836.5L164,835L165,833.4L166,831.8L167,830.2L168,828.5L169,826.9L170,825.1L171,823.4L172,821.7L173,820L174,818.3L175,816.6L176,814.9L177,813.1L178,811.4L179,809.7L180,808L181,806.3L182,804.6L183,802.9L184,801.1L185,799.6L186,798.2L187,796.9L188,795.8L189,794.8L190,794L191,793.3L192,792.6L193,792L194,791.3L195,790.6L196,790L197,789.3L198,788.7L199,788.2L200,787.9L201,787.7L202,787.7L203,787.8L204,788.1L205,788.5L206,788.9L207,789.3L208,789.7L209,790.1L210,790.5L211,790.9L212,791.3L213,791.7L214,792.1L215,792.5L216,792.9L217,793.5L218,794.5L219,796L220,797.9L221,800.1L222,802.8L223,806L224,809.3L225,812.6L226,816L227,819.3L228,822.7L229,826L230,829.3L231,832.6L232,835.4L233,837.7L234,839.7L235,841.2L236,842.2L237,842.8L238,843L239,843.3L240,843.5L241,843.8L242,844L243,844.3L244,844.5L245,844.9L246,845.3L247,845.8L248,846.4L249,846.7L250,846.8L251,846.7L252,846.2L253,845.5L254,844.3L255,842.9L256,841.4L257,840L258,838.6L259,837.3L260,836.1L261,835.1L262,834.1L263,833.2L264,832.4L265,831.6L266,830.9L267,830.1L268,829.3L269,828.6L270,827.8L271,827.1L272,826.3L273,825.5L274,824.8L275,824.1L276,823.5L277,823.1L278,822.8L279,822.6L280,822.6L281,822.7L282,822.8L283,822.9L284,823.1L285,823.2L286,823.3L287,823.5L288,823.6L289,823.7L290,823.9L291,824L292,824.1L293,824.3L294,824.4L295,824.5L296,824.8L297,825.4L298,826.4L299,827.8L300,829.5L301,831.6L302,834.1L303,836.8L304,839.4L305,842.1L306,844.8L307,847.4L308,850.1L309,852.8L310,855.5L311,858.1L312,860.8L313,863.5L314,866.1L315,868.8L316,871.5L317,873.7L318,875.3L319,876.5L320,877.1L321,877.3L322,876.9L323,876L324,875.1L325,874.1L326,873L327,871.7L328,870.3L329,868.8L330,867.2L331,865.5L332,863.7L333,862L334,860.3L335,858.6L336,856.8L337,854.9L338,852.9L339,850.8L340,848.6L341,846.2L342,843.8L343,841.2L344,838.6L345,836.1L346,833.5L347,831L348,828.4L349,825.9L350,823.3L351,820.7L352,818.2L353,815.6L354,813.1L355,810.5L356,808L357,805.4L358,802.8L359,800.3L360,797.7L361,795.2L362,792.6L363,790.1L364,787.5L365,785.1L366,782.8L367,780.7L368,778.6L369,776.7L370,774.9L371,773.1L372,771.4L373,769.7L374,767.9L375,766.2L376,764.4L377,762.7L378,761L379,759.5L380,758.1L381,756.8L382,755.6L383,754.6L384,753.6L385,752.7L386,751.9L387,751L388,750.1L389,749.3L390,748.7L391,748.3L392,748.2L393,748.4L394,748.9L395,749.6L396,750.6L397,751.7L398,752.7L399,753.5L400,754.2L401,754.8L402,755.3L403,755.6L404,755.8L405,756L406,756.2L407,756.4L408,756.5L409,756.7L410,756.9L411,757.1L412,757.3L413,757.5L414,757.7L415,757.9L416,758.1L417,758.3L418,758.5L419,758.7L420,758.9L421,758.8L422,758.5L423,757.8L424,756.9L425,755.6L426,754L427,752.1L428,750.1L429,748.1L430,746.1L431,744.1L432,742.1L433,740.1L434,738.2L435,736.3L436,734.4L437,732.5L438,730.7L439,728.8L440,727L441,725.3L442,723.7L443,722.2L444,720.9L445,720L446,719.5L447,719.5L448,719.9L449,720.5L450,721.5L451,722.7L452,723.9L453,725.1L454,726.3L455,727.6L456,728.9L457,730.4L458,732L459,733.7L460,735.5L461,737.5L462,739.6L463,741.7L464,743.8L465,745.9L466,748L467,750.2L468,752.3L469,754.4L470,756.5L471,758.6L472,760.7L473,762.5L474,763.9L475,765.1L476,765.9L477,766.4L478,766.6L479,766.5L480,766.4L481,766.2L482,766.1L483,766L484,765.8L485,765.7L486,765.6L487,765.4L488,765.3L489,765.2L490,765.1L491,764.8L492,764.1L493,763.2L494,762L495,760.4L496,758.5L497,756.4L498,754.3L499,752.6L500,751.3L501,750.6L502,750.3L503,750.4L504,751L505,752L506,753.4L507,754.9L508,756.6L509,758.5L510,760.5L511,762.7L512,764.8L513,767L514,769.2L515,771.3L516,773.5L517,775.6L518,777.6L519,779.6L520,781.5L521,783.3L522,785.1L523,786.7L524,788.4L525,790L526,791.7L527,793.4L528,795L529,796.7L530,798.3L531,800L532,801.6L533,803.3L534,805L535,806.6L536,808.3L537,809.9L538,811.6L539,813.2L540,814.9L541,816.6L542,818.2L543,819.9L544,821.5L545,823.2L546,824.8L547,826.5L548,828.1L549,829.8L550,831.4L551,833L552,834.6L553,836.2L554,837.8L555,839.4L556,841L557,842.5L558,844.1L559,845.6L560,847L561,848.2L562,849.3L563,850.2L564,850.9L565,851.3L566,851.6L567,851.7L568,851.7L569,851.6L570,851.4L571,851.2L572,851L573,850.8L574,850.6L575,850.5L576,850.3L577,850.1L578,849.9L579,849.7L580,849.5L581,849.3L582,849.2L583,849L584,848.8L585,848.6L586,848.7L587,848.9L588,849.2L589,849.7L590,850.4L591,851.2L592,852.1L593,853.1L594,854L595,854.9L596,855.9L597,856.8L598,857.7L599,858.7L600,859.6L601,860.5L602,861.5L603,862.3L604,863L605,863.6L606,863.9L607,863.8L608,863.4L609,862.6L610,861.6L611,860.4L612,858.9L613,857.4L614,855.9L615,854.4L616,852.9L617,851.4L618,849.9L619,848.4L620,847L621,845.5L622,844.1L623,842.8L624,841.4L625,840.1L626,838.7L627,837.4L628,836.1L629,834.7L630,833.4L631,832.1L632,830.8L633,829.4L634,828.1L635,826.8L636,825.4L637,824.1L638,822.8L639,821.5L640,820.3L641,819.1L642,818.1L643,817.1L644,816.3L645,815.5L646,814.7L647,814L648,813.2L649,812.5L650,811.7L651,811L652,810.2L653,809.6L654,809L655,808.6L656,808.3L657,808L658,807.9L659,807.9L660,807.7L661,807.5L662,807.1L663,806.6L664,805.9L665,805.2L666,804.3L667,803.4L668,802.5L669,801.5L670,800.4L671,799.3L672,798.1L673,796.8L674,795.5L675,794.2L676,792.8L677,791.4L678,790.1L679,788.7L680,787.4L681,786L682,784.7L683,783.3L684,781.9L685,780.6L686,779.2L687,777.9L688,776.5L689,775L690,773.4L691,771.8L692,770.1L693,768.4L694,766.6L695,764.8L696,763L697,761.2L698,759.4L699,757.6L700,755.8L701,754L702,752.2L703,750.4L704,748.6L705,747L706,745.5L707,744.3L708,743.2L709,742.2L710,741.5L711,740.9L712,740.3L713,739.8L714,739.2L715,738.5L716,737.7L717,736.9L718,736.1L719,735.5L720,735.2L721,735.2L722,735.5L723,736.2L724,737.3L725,738.6L726,739.8L727,741.1L728,742.4L729,743.7L730,745L731,746.3L732,747.6L733,748.9L734,750.1L735,751.4L736,752.7L737,754L738,755.3L739,756.6L740,757.9L741,759.2L742,760.4L743,761.7L744,763L745,764.1L746,765L747,765.7L748,766.2L749,766.5L750,766.6L751,766.5L752,766.4L753,766.3L754,766.2L755,766.1L756,765.9L757,765.8L758,765.7L759,765.6L760,765.5L761,765.3L762,765.2L763,765.1L764,765L765,764.6L766,763.9L767,762.9L768,761.5L769,759.8L770,757.7L771,755.3L772,752.8L773,750.3L774,747.8L775,745.3L776,742.8L777,740.3L778,737.8L779,735.4L780,732.9L781,730.5L782,728L783,725.6L784,723.2L785,720.8L786,718.3L787,715.9L788,713.7L789,711.9L790,710.5L791,709.6L792,709L793,708.8L794,708.9L795,709.2L796,709.3L797,709.4L798,709.3L799,709.2L800,709.1L801,709L802,708.9L803,708.7L804,708.6L805,708.5L806,708.4L807,708.3L808,708.2L809,708L810,707.9L811,707.8L812,707.5L813,707L814,706.1L815,705.1L816,703.7L817,702.1L818,700.2L819,698.1L820,696.2L821,694.5L822,693.2L823,692.2L824,691.5L825,691.1L826,691.2L827,691.6L828,692L829,692.5L830,693.1L831,693.7L832,694.3L833,694.9L834,695.5L835,696.2L836,696.8L837,697.7L838,698.8L839,700.2L840,701.9L841,703.9L842,706.2L843,708.7L844,711.3L845,713.9L846,716.6L847,719.2L848,721.8L849,724.4L850,727L851,729.6L852,732.2L853,734.8L854,737.6L855,740.5L856,743.6L857,746.9L858,750.3L859,754L860,757.8L861,761.6L862,765.4L863,769.3L864,772.8L865,775.9L866,778.6L867,780.8L868,782.5L869,783.7L870,784.6L871,785.2L872,785.8L873,786.4L874,787.1L875,787.7L876,788.3L877,788.9L878,789.6L879,790.2L880,790.8L881,791.4L882,792.1L883,792.7L884,793.3L885,793.9L886,794.6L887,795.2L888,795.8L889,796.3L890,796.6L891,796.7L892,796.6L893,796.4L894,796L895,795.5L896,795.2L897,794.9L898,794.6L899,794.5L900,794.5L901,794.5L902,794.6L903,794.6L904,794.7L905,794.7L906,794.8L907,794.8L908,794.9L909,794.9L910,795L911,795L912,795.1L913,795.1L914,795.3L915,795.7L916,796.4L917,797.4L918,798.6L919,800.2L920,801.9L921,803.9L922,805.9L923,807.8L924,809.8L925,811.7L926,813.7L927,815.6L928,817.6L929,819.5L930,821.5L931,823.4L932,825.4L933,827.3L934,829.3L935,831.3L936,833.2L937,835.2L938,836.9L939,838.4L940,839.5L941,840.3L942,840.7L943,840.8L944,840.6L945,840.2L946,839.8L947,839.4L948,838.9L949,838.5L950,838.1L951,837.7L952,837.2L953,836.8L954,836.4L955,836L956,835.6L957,835.2L958,834.9L959,834.7L960,834.5L961,834.4L962,834.3L963,834.2L964,834.2L965,834.1L966,834L967,834L968,833.9L969,833.9L970,833.8L971,833.7L972,833.7L973,833.5L974,833.4L975,833.2L976,832.9L977,832.6L978,832.3L979,831.9L980,831.5L981,831L982,830.3L983,829.5L984,828.5L985,827.4L986,826.2L987,824.8L988,823.4L989,821.9L990,820.5L991,819.1L992,817.7L993,816.3L994,814.9L995,813.5L996,812.1L997,810.7L998,809.3L999,807.8L1000,806.4L1001,805L1002,803.6L1003,802.2L1004,801L1005,800L1006,799.2L1007,798.7L1008,798.4L1009,798.4L1010,798.5L1011,798.7L1012,799L1013,799.2L1014,799.4L1015,799.6L1016,799.8L1017,800.1L1018,800.3L1019,800.5L1020,800.7L1021,800.9L1022,801.1L1023,801.4L1024,801.8L1025,802.7L1026,804L1027,805.8L1028,808L1029,810.5L1030,813.5L1031,816.8L1032,820.1L1033,823.6L1034,827.1L1035,830.8L1036,834.6L1037,838.5L1038,842.5L1039,846.5L1040,850.5L1041,854.4L1042,858.4L1043,862.4L1044,866.4L1045,870L1046,873L1047,875.6L1048,877.6L1049,879L1050,880L1051,880.4L1052,880.6L1053,880.8L1054,881.1L1055,881.3L1056,881.5L1057,881.8L1058,882L1059,882.3L1060,882.6L1061,883.1L1062,883.5L1063,883.7L1064,883.7L1065,883.4L1066,882.9L1067,882.1L1068,880.9L1069,879.7L1070,878.4L1071,877.1L1072,875.9L1073,874.6L1074,873.3L1075,872L1076,870.4L1077,868.8L1078,867L1079,865L1080,862.9L1081,860.6L1082,858.4L1083,856.1L1084,853.8L1085,851.5L1086,849.3L1087,847L1088,844.7L1089,842.4L1090,840.1L1091,837.9L1092,835.6L1093,833.3L1094,831L1095,828.8L1096,826.5L1097,824.2L1098,821.9L1099,819.7L1100,817.4L1101,815.1L1102,812.8L1103,810.5L1104,808.3L1105,806L1106,803.7L1107,801.4L1108,799.2L1109,796.9L1110,794.6L1111,792.3L1112,790L1113,787.8L1114,785.5L1115,783.2L1116,780.9L1117,778.6L1118,776.4L1119,774.1L1120,771.8L1121,769.5L1122,767.2L1123,764.9L1124,762.6L1125,760.3L1126,758.1L1127,755.8L1128,753.5L1129,751.2L1130,749L1131,747.1L1132,745.5L1133,744L1134,742.9L1135,742L1136,741.3L1137,740.7L1138,740.2L1139,739.6L1140,739.1L1141,738.5L1142,738L1143,737.4L1144,736.9L1145,736.3L1146,735.8L1147,735.2L1148,734.7L1149,734.1L1150,733.6L1151,733.1L1152,732.5L1153,732L1154,731.2L1155,730.6L1156,730.1L1157,729.8L1158,729.7L1159,729.7L1160,729.9L1161,730.4L1162,731L1163,731.6L1164,732.1L1165,732.7L1166,733.3L1167,733.8L1168,734.4L1169,734.9L1170,735.5L1171,736.1L1172,736.6L1173,737.2L1174,737.8L1175,738.3L1176,738.9L1177,739.4L1178,739.8L1179,740.1L1180,740.2L1181,740.3L1182,740.3L1183,740.1L1184,739.9L1185,739.7L1186,739.6L1187,739.4L1188,739.2L1189,739L1190,738.8L1191,738.6L1192,738.4L1193,738.2L1194,738.1L1195,737.9L1196,737.7L1197,737.5L1198,737.3L1199,737.1L1200,736.9L1201,736.7L1202,736.4L1203,736.2L1204,736.1L1205,736L1206,736L1207,735.9L1208,736.2L1209,736.5L1210,736.9L1211,737.5L1212,738.1L1213,738.9L1214,739.7L1215,740.6L1216,741.6L1217,742.7L1218,744L1219,745.6L1220,747.2L1221,749.1L1222,751.2L1223,753.4L1224,755.5L1225,757.7L1226,759.9L1227,762L1228,764.2L1229,766.4L1230,768.5L1231,770.7L1232,772.9L1233,775.1L1234,777.2L1235,779.4L1236,781.6L1237,783.7L1238,785.9L1239,788.1L1240,790.2L1241,792.4L1242,794.6L1243,796.5L1244,798.3L1245,799.8L1246,801.1L1247,802.2L1248,803.1L1249,803.8L1250,804.4L1251,805.1L1252,805.8L1253,806.4L1254,807.1L1255,807.8L1256,808.4L1257,809.1L1258,809.8L1259,810.4L1260,811.1L1261,811.8L1262,812.4L1263,813.1L1264,813.8L1265,814.5L1266,815.3L1267,816L1268,816.8L1269,817.6L1270,818.4L1271,819.2L1272,820L1273,820.8L1274,821.6L1275,822.5L1276,823.3L1277,824.1L1278,824.9L1279,825.7L1280,826.7L1281,827.7L1282,828.3L1283,828.4L1284,828.1L1285,827.4L1286,826.2L1287,824.5L1288,822.3L1289,820L1290,817.7L1291,815.5L1292,813.2L1293,810.9L1294,808.7L1295,806.4L1296,804.1L1297,801.9L1298,799.6L1299,797.4L1300,795.1L1301,792.8L1302,790.6L1303,788.3L1304,785.8L1305,783L1306,779.9L1307,776.6L1308,773L1309,769.2L1310,765.1L1311,760.9L1312,756.8L1313,752.9L1314,749.2L1315,745.7L1316,742.4L1317,739.2L1318,736.3L1319,733.6L1320,731.1L1321,728.8L1322,726.7L1323,724.8L1324,723.2L1325,721.8L1326,720.6L1327,719.3L1328,718.1L1329,717L1330,715.9L1331,714.8L1332,713.9L1333,712.9L1334,712.1L1335,711.3L1336,710.4L1337,709.6L1338,708.8L1339,708.1L1340,707.3L1341,706.6L1342,705.9L1343,705.3L1344,704.8L1345,704.4L1346,704.1L1347,703.9L1348,703.7L1349,703.7L1350,703.7L1351,703.7L1352,703.8L1353,703.8L1354,703.8L1355,703.9L1356,703.9L1357,703.9L1358,704L1359,704L1360,704.1L1361,704.2L1362,704.3L1363,704.4L1364,704.5L1365,704.7L1366,704.8L1367,705.1L1368,705.5L1369,705.9L1370,706.4L1371,706.9L1372,707.6L1373,708.2L1374,708.9L1375,709.5L1376,710.2L1377,710.8L1378,711.5L1379,712.1L1380,712.8L1381,713.4L1382,714.1L1383,714.7L1384,715.4L1385,716L1386,716.6L1387,717.2L1388,717.7L1389,718.3L1390,718.8L1391,719.3L1392,719.8L1393,720.3L1394,720.8L1395,721.3L1396,721.8L1397,722.3L1398,722.8L1399,723.3L1400,723.8L1401,724.2L1402,724.7L1403,725.2L1404,725.7L1405,726.2L1406,726.7L1407,727.2L1408,727.7L1409,728.2L1410,728.7L1411,729.2L1412,729.8L1413,730.6L1414,731.6L1415,732.8L1416,734.2L1417,735.7L1418,737.5L1419,739.3L1420,741.1L1421,742.9L1422,744.7L1423,746.6L1424,748.4L1425,750.2L1426,752L1427,753.9L1428,755.7L1429,757.7L1430,759.7L1431,761.7L1432,763.7L1433,765.8L1434,767.9L1435,770.1L1436,772.2L1437,774.3L1438,776.4L1439,778.3L1440,780.2L1441,782L1442,783.7L1443,785.3L1444,786.8L1445,788.3L1446,789.8L1447,791.3L1448,792.8L1449,794.3L1450,795.8L1451,797.3L1452,798.7L1453,800.2L1454,801.7L1455,803.2L1456,804.6L1457,805.9L1458,807.2L1459,808.5L1460,809.7L1461,810.8L1462,811.6L1463,812.2L1464,812.5L1465,812.6L1466,812.4L1467,812L1468,811.5L1469,811.1L1470,810.7L1471,810.4L1472,810.2L1473,810.1L1474,809.9L1475,809.8L1476,809.6L1477,809.5L1478,809.4L1479,809.2L1480,809.1L1481,809L1482,808.8L1483,808.7L1484,808.5L1485,808.4L1486,808.4L1487,808.7L1488,809.4L1489,810.4L1490,811.8L1491,813.5L1492,815.5L1493,817.8L1494,820L1495,822.3L1496,824.5L1497,826.8L1498,829L1499,831.3L1500,833.4L1501,835.3L1502,837.1L1503,838.7L1504,840.1L1505,841.3L1506,842.4L1507,843.4L1508,844.4L1509,845.4L1510,846.4L1511,847.3L1512,848.1L1513,848.8L1514,849.5L1515,850.1L1516,850.6L1517,851.1L1518,851.6L1519,852.1L1520,852.6L1521,853.1L1522,853.6L1523,854.1L1524,854.6L1525,855.1L1526,855.6L1527,856.2L1528,856.9L1529,857.8L1530,858.9L1531,860.2L1532,861.6L1533,863.3L1534,865L1535,866.7L1536,868.4L1537,870.1L1538,871.9L1539,873.5L1540,875L1541,876.3L1542,877.4L1543,878.3L1544,879.1L1545,879.6L1546,880.1L1547,880.6L1548,881.1L1549,881.6L1550,882L1551,882.3L1552,882.4L1553,882.5L1554,882.3L1555,881.9L1556,881.4L1557,880.7L1558,880L1559,879.1L1560,878.2L1561,877.4L1562,876.5L1563,875.6L1564,874.7L1565,873.9L1566,873.1L1567,872.3L1568,871.6L1569,870.9L1570,870.2L1571,869.5L1572,868.8L1573,868.1L1574,867.4L1575,866.7L1576,866.1L1577,865.4L1578,864.7L1579,864L1580,863.3L1581,862.6L1582,861.9L1583,861.3L1584,860.6L1585,859.9L1586,859.2L1587,858.5L1588,857.8L1589,857.2L1590,856.5L1591,855.8L1592,855.3L1593,854.8L1594,854.5L1595,854.3L1596,854.1L1597,854.1L1598,854.2L1599,854.2L1600,854.2L1601,854.3L1602,854.3L1603,854.3L1604,854.4L1605,854.4L1606,854.5L1607,854.5L1608,854.5L1609,854.6L1610,854.6L1611,854.6L1612,854.7L1613,854.7L1614,854.7L1615,854.8L1616,854.8L1617,854.9L1618,854.9L1619,855.2L1620,855.8L1621,856.7L1622,857.8L1623,859.1L1624,860.5L1625,862.1L1626,863.6L1627,864.2L1628,863.7L1629,862.2L1630,859.7L1631,856.3L1632,852.4L1633,848.3L1634,844.8L1635,842.1L1636,840.2L1637,839.1L1638,838.7L1639,838.7L1640,838.7L1641,838.7L1642,838.7L1643,838.7L1644,838.7L1645,838.7L1646,838.7L1647,838.7L1648,838.7L1649,838.7L1650,838.8L1651,839L1652,839.2L1653,839.6L1654,840.1L1655,840.7L1656,841.5L1657,842.2L1658,843.2L1659,844.5L1660,846L1661,847.8L1662,850L1663,852.3L1664,855L1665,857.7L1666,860.4L1667,862.9L1668,865L1669,866.9L1670,868.4L1671,869.7L1672,870.6L1673,871.2L1674,871.7L1675,872.2L1676,872.7L1677,873.2L1678,873.6L1679,874L1680,874.3L1681,874.5L1682,874.8L1683,874.9L1684,875L1685,875.1L1686,875.3L1687,875.5L1688,875.7L1689,875.8L1690,875.4L1691,874.6L1692,873.3L1693,871.7L1694,870L1695,868.2L1696,866.6L1697,865.4L1698,864.7L1699,864.3L1700,864.4L1701,864.4L1702,864.5L1703,864.5L1704,864.6L1705,864.6L1706,864.7L1707,864.7L1708,864.8L1709,864.8L1710,864.9L1711,864.9L1712,865L1713,865L1714,865.1L1715,865.1L1716,865.2L1717,865.3L1718,865.5L1719,865.9L1720,866L1721,865.8L1722,865.4L1723,864.7L1724,863.5L1725,862L1726,860.1L1727,858.2L1728,856.1L1729,854L1730,851.7L1731,849.4L1732,846.9L1733,844.4L1734,841.8L1735,839.1L1736,836.5L1737,833.9L1738,831.2L1739,828.6L1740,826L1741,823.4L1742,820.9L1743,818.6L1744,816.4L1745,814.3L1746,812.4L1747,810.6L1748,808.8L1749,807.1L1750,805.3L1751,803.6L1752,801.8L1753,800.1L1754,798.3L1755,796.6L1756,794.8L1757,793.1L1758,791.3L1759,789.6L1760,787.8L1761,786.1L1762,784.3L1763,782.6L1764,780.8L1765,779.1L1766,777.3L1767,775.6L1768,774.2L1769,773.1L1770,772.3L1771,771.8L1772,771.6L1773,771.8L1774,772.3L1775,772.9L1776,773.5L1777,774.1L1778,774.8L1779,775.5L1780,776.3L1781,777L1782,777.7L1783,778.4L1784,779.1L1785,779.8L1786,780.5L1787,781.2L1788,781.9L1789,782.7L1790,783.4L1791,784.1L1792,784.8L1793,785.5L1794,786.2L1795,786.9L1796,787.6L1797,788.3L1798,789L1799,789.4L1800,789.5L1801,789.5L1802,789.2L1803,788.7L1804,788L1805,787.1L1806,786L1807,784.7L1808,783.2L1809,781.4L1810,779.4L1811,777.2L1812,774.8L1813,772.3L1814,769.9L1815,767.4L1816,764.9L1817,762.5L1818,760L1819,757.5L1820,755.1L1821,752.6L1822,750.1L1823,747.7L1824,745.3L1825,743.2L1826,741.1L1827,739.3L1828,737.5L1829,736L1830,734.5L1831,733.2L1832,731.8L1833,730.4L1834,729L1835,727.6L1836,726.3L1837,724.9L1838,724.2L1839,723.5L1840,722.9L1840,782 Z" fill="#90caf9"/>
<path d="M70,782L70,835.2L71,835.2L72,835.2L73,835.2L74,835.2L75,835.2L76,835.2L77,835.2L78,835.2L79,835.2L80,835.3L81,835.5L82,835.7L83,836L84,836.3L85,836.7L86,837.1L87,837.6L88,838.1L89,838.7L90,839.5L91,840.3L92,841.2L93,842.3L94,843.4L95,844.5L96,845.6L97,846.8L98,847.9L99,849L100,850.1L101,851.2L102,852.3L103,853.5L104,854.6L105,855.7L106,856.8L107,857.9L108,859L109,860.2L110,861.3L111,862.4L112,863.5L113,864.6L114,865.7L115,866.9L116,868L117,869.1L118,870.2L119,871.3L120,872.4L121,873.6L122,874.7L123,875.8L124,876.9L125,878L126,879.1L127,880.3L128,881.4L129,882.5L130,883.6L131,884.8L132,885.9L133,887.2L134,888.4L135,889.5L136,890.2L137,890.5L138,890.3L139,889.8L140,888.8L141,887.4L142,885.8L143,884.1L144,882.5L145,880.9L146,879.2L147,877.6L148,876L149,874.4L150,872.8L151,871.2L152,869.7L153,868.2L154,866.7L155,865.2L156,863.7L157,862.1L158,860.6L159,859.1L160,857.6L161,856.1L162,854.6L163,853.1L164,851.6L165,850.1L166,848.6L167,847.1L168,845.6L169,844.1L170,842.6L171,841L172,839.5L173,838L174,836.5L175,835L176,833.4L177,831.8L178,830.2L179,828.5L180,826.9L181,825.1L182,823.4L183,821.7L184,820L185,818.3L186,816.6L187,814.9L188,813.1L189,811.4L190,809.7L191,808L192,806.3L193,804.6L194,802.9L195,801.1L196,799.6L197,798.2L198,796.9L199,795.8L200,794.8L201,794L202,793.3L203,792.6L204,792L205,791.3L206,790.6L207,790L208,789.3L209,788.7L210,788.2L211,787.9L212,787.7L213,787.7L214,787.8L215,788.1L216,788.5L217,788.9L218,789.3L219,789.7L220,790.1L221,790.5L222,790.9L223,791.3L224,791.7L225,792.1L226,792.5L227,792.9L228,793.5L229,794.5L230,796L231,797.9L232,800.1L233,802.8L234,806L235,809.3L236,812.6L237,816L238,819.3L239,822.7L240,826L241,829.3L242,832.6L243,835.4L244,837.7L245,839.7L246,841.2L247,842.2L248,842.8L249,843L250,843.3L251,843.5L252,843.8L253,844L254,844.3L255,844.5L256,844.9L257,845.3L258,845.8L259,846.4L260,846.7L261,846.8L262,846.7L263,846.2L264,845.5L265,844.3L266,842.9L267,841.4L268,840L269,838.6L270,837.3L271,836.1L272,835.1L273,834.1L274,833.2L275,832.4L276,831.6L277,830.9L278,830.1L279,829.3L280,828.6L281,827.8L282,827.1L283,826.3L284,825.5L285,824.8L286,824.1L287,823.5L288,823.1L289,822.8L290,822.6L291,822.6L292,822.7L293,822.8L294,822.9L295,823.1L296,823.2L297,823.3L298,823.5L299,823.6L300,823.7L301,823.9L302,824L303,824.1L304,824.3L305,824.4L306,824.5L307,824.8L308,825.4L309,826.4L310,827.8L311,829.5L312,831.6L313,834.1L314,836.8L315,839.4L316,842.1L317,844.8L318,847.4L319,850.1L320,852.8L321,855.5L322,858.1L323,860.8L324,863.5L325,866.1L326,868.8L327,871.5L328,873.7L329,875.3L330,876.5L331,877.1L332,877.3L333,876.9L334,876L335,875.1L336,874.1L337,873L338,871.7L339,870.3L340,868.8L341,867.2L342,865.5L343,863.7L344,862L345,860.3L346,858.6L347,856.8L348,854.9L349,852.9L350,850.8L351,848.6L352,846.2L353,843.8L354,841.2L355,838.6L356,836.1L357,833.5L358,831L359,828.4L360,825.9L361,823.3L362,820.7L363,818.2L364,815.6L365,813.1L366,810.5L367,808L368,805.4L369,802.8L370,800.3L371,797.7L372,795.2L373,792.6L374,790.1L375,787.5L376,785.1L377,782.8L378,780.7L379,778.6L380,776.7L381,774.9L382,773.1L383,771.4L384,769.7L385,767.9L386,766.2L387,764.4L388,762.7L389,761L390,759.5L391,758.1L392,756.8L393,755.6L394,754.6L395,753.6L396,752.7L397,751.9L398,751L399,750.1L400,749.3L401,748.7L402,748.3L403,748.2L404,748.4L405,748.9L406,749.6L407,750.6L408,751.7L409,752.7L410,753.5L411,754.2L412,754.8L413,755.3L414,755.6L415,755.8L416,756L417,756.2L418,756.4L419,756.5L420,756.7L421,756.9L422,757.1L423,757.3L424,757.5L425,757.7L426,757.9L427,758.1L428,758.3L429,758.5L430,758.7L431,758.9L432,758.8L433,758.5L434,757.8L435,756.9L436,755.6L437,754L438,752.1L439,750.1L440,748.1L441,746.1L442,744.1L443,742.1L444,740.1L445,738.2L446,736.3L447,734.4L448,732.5L449,730.7L450,728.8L451,727L452,725.3L453,723.7L454,722.2L455,720.9L456,720L457,719.5L458,719.5L459,719.9L460,720.5L461,721.5L462,722.7L463,723.9L464,725.1L465,726.3L466,727.6L467,728.9L468,730.4L469,732L470,733.7L471,735.5L472,737.5L473,739.6L474,741.7L475,743.8L476,745.9L477,748L478,750.2L479,752.3L480,754.4L481,756.5L482,758.6L483,760.7L484,762.5L485,763.9L486,765.1L487,765.9L488,766.4L489,766.6L490,766.5L491,766.4L492,766.2L493,766.1L494,766L495,765.8L496,765.7L497,765.6L498,765.4L499,765.3L500,765.2L501,765.1L502,764.8L503,764.1L504,763.2L505,762L506,760.4L507,758.5L508,756.4L509,754.3L510,752.6L511,751.3L512,750.6L513,750.3L514,750.4L515,751L516,752L517,753.4L518,754.9L519,756.6L520,758.5L521,760.5L522,762.7L523,764.8L524,767L525,769.2L526,771.3L527,773.5L528,775.6L529,777.6L530,779.6L531,781.5L532,783.3L533,785.1L534,786.7L535,788.4L536,790L537,791.7L538,793.4L539,795L540,796.7L541,798.3L542,800L543,801.6L544,803.3L545,805L546,806.6L547,808.3L548,809.9L549,811.6L550,813.2L551,814.9L552,816.6L553,818.2L554,819.9L555,821.5L556,823.2L557,824.8L558,826.5L559,828.1L560,829.8L561,831.4L562,833L563,834.6L564,836.2L565,837.8L566,839.4L567,841L568,842.5L569,844.1L570,845.6L571,847L572,848.2L573,849.3L574,850.2L575,850.9L576,851.3L577,851.6L578,851.7L579,851.7L580,851.6L581,851.4L582,851.2L583,851L584,850.8L585,850.6L586,850.5L587,850.3L588,850.1L589,849.9L590,849.7L591,849.5L592,849.3L593,849.2L594,849L595,848.8L596,848.6L597,848.7L598,848.9L599,849.2L600,849.7L601,850.4L602,851.2L603,852.1L604,853.1L605,854L606,854.9L607,855.9L608,856.8L609,857.7L610,858.7L611,859.6L612,860.5L613,861.5L614,862.3L615,863L616,863.6L617,863.9L618,863.8L619,863.4L620,862.6L621,861.6L622,860.4L623,858.9L624,857.4L625,855.9L626,854.4L627,852.9L628,851.4L629,849.9L630,848.4L631,847L632,845.5L633,844.1L634,842.8L635,841.4L636,840.1L637,838.7L638,837.4L639,836.1L640,834.7L641,833.4L642,832.1L643,830.8L644,829.4L645,828.1L646,826.8L647,825.4L648,824.1L649,822.8L650,821.5L651,820.3L652,819.1L653,818.1L654,817.1L655,816.3L656,815.5L657,814.7L658,814L659,813.2L660,812.5L661,811.7L662,811L663,810.2L664,809.6L665,809L666,808.6L667,808.3L668,808L669,807.9L670,807.9L671,807.7L672,807.5L673,807.1L674,806.6L675,805.9L676,805.2L677,804.3L678,803.4L679,802.5L680,801.5L681,800.4L682,799.3L683,798.1L684,796.8L685,795.5L686,794.2L687,792.8L688,791.4L689,790.1L690,788.7L691,787.4L692,786L693,784.7L694,783.3L695,781.9L696,780.6L697,779.2L698,777.9L699,776.5L700,775L701,773.4L702,771.8L703,770.1L704,768.4L705,766.6L706,764.8L707,763L708,761.2L709,759.4L710,757.6L711,755.8L712,754L713,752.2L714,750.4L715,748.6L716,747L717,745.5L718,744.3L719,743.2L720,742.2L721,741.5L722,740.9L723,740.3L724,739.8L725,739.2L726,738.5L727,737.7L728,736.9L729,736.1L730,735.5L731,735.2L732,735.2L733,735.5L734,736.2L735,737.3L736,738.6L737,739.8L738,741.1L739,742.4L740,743.7L741,745L742,746.3L743,747.6L744,748.9L745,750.1L746,751.4L747,752.7L748,754L749,755.3L750,756.6L751,757.9L752,759.2L753,760.4L754,761.7L755,763L756,764.1L757,765L758,765.7L759,766.2L760,766.5L761,766.6L762,766.5L763,766.4L764,766.3L765,766.2L766,766.1L767,765.9L768,765.8L769,765.7L770,765.6L771,765.5L772,765.3L773,765.2L774,765.1L775,765L776,764.6L777,763.9L778,762.9L779,761.5L780,759.8L781,757.7L782,755.3L783,752.8L784,750.3L785,747.8L786,745.3L787,742.8L788,740.3L789,737.8L790,735.4L791,732.9L792,730.5L793,728L794,725.6L795,723.2L796,720.8L797,718.3L798,715.9L799,713.7L800,711.9L801,710.5L802,709.6L803,709L804,708.8L805,708.9L806,709.2L807,709.3L808,709.4L809,709.3L810,709.2L811,709.1L812,709L813,708.9L814,708.7L815,708.6L816,708.5L817,708.4L818,708.3L819,708.2L820,708L821,707.9L822,707.8L823,707.5L824,707L825,706.1L826,705.1L827,703.7L828,702.1L829,700.2L830,698.1L831,696.2L832,694.5L833,693.2L834,692.2L835,691.5L836,691.1L837,691.2L838,691.6L839,692L840,692.5L841,693.1L842,693.7L843,694.3L844,694.9L845,695.5L846,696.2L847,696.8L848,697.7L849,698.8L850,700.2L851,701.9L852,703.9L853,706.2L854,708.7L855,711.3L856,713.9L857,716.6L858,719.2L859,721.8L860,724.4L861,727L862,729.6L863,732.2L864,734.8L865,737.6L866,740.5L867,743.6L868,746.9L869,750.3L870,754L871,757.8L872,761.6L873,765.4L874,769.3L875,772.8L876,775.9L877,778.6L878,780.8L879,782.5L880,783.7L881,784.6L882,785.2L883,785.8L884,786.4L885,787.1L886,787.7L887,788.3L888,788.9L889,789.6L890,790.2L891,790.8L892,791.4L893,792.1L894,792.7L895,793.3L896,793.9L897,794.6L898,795.2L899,795.8L900,796.3L901,796.6L902,796.7L903,796.6L904,796.4L905,796L906,795.5L907,795.2L908,794.9L909,794.6L910,794.5L911,794.5L912,794.5L913,794.6L914,794.6L915,794.7L916,794.7L917,794.8L918,794.8L919,794.9L920,794.9L921,795L922,795L923,795.1L924,795.1L925,795.3L926,795.7L927,796.4L928,797.4L929,798.6L930,800.2L931,801.9L932,803.9L933,805.9L934,807.8L935,809.8L936,811.7L937,813.7L938,815.6L939,817.6L940,819.5L941,821.5L942,823.4L943,825.4L944,827.3L945,829.3L946,831.3L947,833.2L948,835.2L949,836.9L950,838.4L951,839.5L952,840.3L953,840.7L954,840.8L955,840.6L956,840.2L957,839.8L958,839.4L959,838.9L960,838.5L961,838.1L962,837.7L963,837.2L964,836.8L965,836.4L966,836L967,835.6L968,835.2L969,834.9L970,834.7L971,834.5L972,834.4L973,834.3L974,834.2L975,834.2L976,834.1L977,834L978,834L979,833.9L980,833.9L981,833.8L982,833.7L983,833.7L984,833.5L985,833.4L986,833.2L987,832.9L988,832.6L989,832.3L990,831.9L991,831.5L992,831L993,830.3L994,829.5L995,828.5L996,827.4L997,826.2L998,824.8L999,823.4L1000,821.9L1001,820.5L1002,819.1L1003,817.7L1004,816.3L1005,814.9L1006,813.5L1007,812.1L1008,810.7L1009,809.3L1010,807.8L1011,806.4L1012,805L1013,803.6L1014,802.2L1015,801L1016,800L1017,799.2L1018,798.7L1019,798.4L1020,798.4L1021,798.5L1022,798.7L1023,799L1024,799.2L1025,799.4L1026,799.6L1027,799.8L1028,800.1L1029,800.3L1030,800.5L1031,800.7L1032,800.9L1033,801.1L1034,801.4L1035,801.8L1036,802.7L1037,804L1038,805.8L1039,808L1040,810.5L1041,813.5L1042,816.8L1043,820.1L1044,823.6L1045,827.1L1046,830.8L1047,834.6L1048,838.5L1049,842.5L1050,846.5L1051,850.5L1052,854.4L1053,858.4L1054,862.4L1055,866.4L1056,870L1057,873L1058,875.6L1059,877.6L1060,879L1061,880L1062,880.4L1063,880.6L1064,880.8L1065,881.1L1066,881.3L1067,881.5L1068,881.8L1069,882L1070,882.3L1071,882.6L1072,883.1L1073,883.5L1074,883.7L1075,883.7L1076,883.4L1077,882.9L1078,882.1L1079,880.9L1080,879.7L1081,878.4L1082,877.1L1083,875.9L1084,874.6L1085,873.3L1086,872L1087,870.4L1088,868.8L1089,867L1090,865L1091,862.9L1092,860.6L1093,858.4L1094,856.1L1095,853.8L1096,851.5L1097,849.3L1098,847L1099,844.7L1100,842.4L1101,840.1L1102,837.9L1103,835.6L1104,833.3L1105,831L1106,828.8L1107,826.5L1108,824.2L1109,821.9L1110,819.7L1111,817.4L1112,815.1L1113,812.8L1114,810.5L1115,808.3L1116,806L1117,803.7L1118,801.4L1119,799.2L1120,796.9L1121,794.6L1122,792.3L1123,790L1124,787.8L1125,785.5L1126,783.2L1127,780.9L1128,778.6L1129,776.4L1130,774.1L1131,771.8L1132,769.5L1133,767.2L1134,764.9L1135,762.6L1136,760.3L1137,758.1L1138,755.8L1139,753.5L1140,751.2L1141,749L1142,747.1L1143,745.5L1144,744L1145,742.9L1146,742L1147,741.3L1148,740.7L1149,740.2L1150,739.6L1151,739.1L1152,738.5L1153,738L1154,737.4L1155,736.9L1156,736.3L1157,735.8L1158,735.2L1159,734.7L1160,734.1L1161,733.6L1162,733.1L1163,732.5L1164,732L1165,731.2L1166,730.6L1167,730.1L1168,729.8L1169,729.7L1170,729.7L1171,729.9L1172,730.4L1173,731L1174,731.6L1175,732.1L1176,732.7L1177,733.3L1178,733.8L1179,734.4L1180,734.9L1181,735.5L1182,736.1L1183,736.6L1184,737.2L1185,737.8L1186,738.3L1187,738.9L1188,739.4L1189,739.8L1190,740.1L1191,740.2L1192,740.3L1193,740.3L1194,740.1L1195,739.9L1196,739.7L1197,739.6L1198,739.4L1199,739.2L1200,739L1201,738.8L1202,738.6L1203,738.4L1204,738.2L1205,738.1L1206,737.9L1207,737.7L1208,737.5L1209,737.3L1210,737.1L1211,736.9L1212,736.7L1213,736.4L1214,736.2L1215,736.1L1216,736L1217,736L1218,735.9L1219,736.2L1220,736.5L1221,736.9L1222,737.5L1223,738.1L1224,738.9L1225,739.7L1226,740.6L1227,741.6L1228,742.7L1229,744L1230,745.6L1231,747.2L1232,749.1L1233,751.2L1234,753.4L1235,755.5L1236,757.7L1237,759.9L1238,762L1239,764.2L1240,766.4L1241,768.5L1242,770.7L1243,772.9L1244,775.1L1245,777.2L1246,779.4L1247,781.6L1248,783.7L1249,785.9L1250,788.1L1251,790.2L1252,792.4L1253,794.6L1254,796.5L1255,798.3L1256,799.8L1257,801.1L1258,802.2L1259,803.1L1260,803.8L1261,804.4L1262,805.1L1263,805.8L1264,806.4L1265,807.1L1266,807.8L1267,808.4L1268,809.1L1269,809.8L1270,810.4L1271,811.1L1272,811.8L1273,812.4L1274,813.1L1275,813.8L1276,814.5L1277,815.3L1278,816L1279,816.8L1280,817.6L1281,818.4L1282,819.2L1283,820L1284,820.8L1285,821.6L1286,822.5L1287,823.3L1288,824.1L1289,824.9L1290,825.7L1291,826.7L1292,827.7L1293,828.3L1294,828.4L1295,828.1L1296,827.4L1297,826.2L1298,824.5L1299,822.3L1300,820L1301,817.7L1302,815.5L1303,813.2L1304,810.9L1305,808.7L1306,806.4L1307,804.1L1308,801.9L1309,799.6L1310,797.4L1311,795.1L1312,792.8L1313,790.6L1314,788.3L1315,785.8L1316,783L1317,779.9L1318,776.6L1319,773L1320,769.2L1321,765.1L1322,760.9L1323,756.8L1324,752.9L1325,749.2L1326,745.7L1327,742.4L1328,739.2L1329,736.3L1330,733.6L1331,731.1L1332,728.8L1333,726.7L1334,724.8L1335,723.2L1336,721.8L1337,720.6L1338,719.3L1339,718.1L1340,717L1341,715.9L1342,714.8L1343,713.9L1344,712.9L1345,712.1L1346,711.3L1347,710.4L1348,709.6L1349,708.8L1350,708.1L1351,707.3L1352,706.6L1353,705.9L1354,705.3L1355,704.8L1356,704.4L1357,704.1L1358,703.9L1359,703.7L1360,703.7L1361,703.7L1362,703.7L1363,703.8L1364,703.8L1365,703.8L1366,703.9L1367,703.9L1368,703.9L1369,704L1370,704L1371,704.1L1372,704.2L1373,704.3L1374,704.4L1375,704.5L1376,704.7L1377,704.8L1378,705.1L1379,705.5L1380,705.9L1381,706.4L1382,706.9L1383,707.6L1384,708.2L1385,708.9L1386,709.5L1387,710.2L1388,710.8L1389,711.5L1390,712.1L1391,712.8L1392,713.4L1393,714.1L1394,714.7L1395,715.4L1396,716L1397,716.6L1398,717.2L1399,717.7L1400,718.3L1401,718.8L1402,719.3L1403,719.8L1404,720.3L1405,720.8L1406,721.3L1407,721.8L1408,722.3L1409,722.8L1410,723.3L1411,723.8L1412,724.2L1413,724.7L1414,725.2L1415,725.7L1416,726.2L1417,726.7L1418,727.2L1419,727.7L1420,728.2L1421,728.7L1422,729.2L1423,729.8L1424,730.6L1425,731.6L1426,732.8L1427,734.2L1428,735.7L1429,737.5L1430,739.3L1431,741.1L1432,742.9L1433,744.7L1434,746.6L1435,748.4L1436,750.2L1437,752L1438,753.9L1439,755.7L1440,757.7L1441,759.7L1442,761.7L1443,763.7L1444,765.8L1445,767.9L1446,770.1L1447,772.2L1448,774.3L1449,776.4L1450,778.3L1451,780.2L1452,782L1453,783.7L1454,785.3L1455,786.8L1456,788.3L1457,789.8L1458,791.3L1459,792.8L1460,794.3L1461,795.8L1462,797.3L1463,798.7L1464,800.2L1465,801.7L1466,803.2L1467,804.6L1468,805.9L1469,807.2L1470,808.5L1471,809.7L1472,810.8L1473,811.6L1474,812.2L1475,812.5L1476,812.6L1477,812.4L1478,812L1479,811.5L1480,811.1L1481,810.7L1482,810.4L1483,810.2L1484,810.1L1485,809.9L1486,809.8L1487,809.6L1488,809.5L1489,809.4L1490,809.2L1491,809.1L1492,809L1493,808.8L1494,808.7L1495,808.5L1496,808.4L1497,808.4L1498,808.7L1499,809.4L1500,810.4L1501,811.8L1502,813.5L1503,815.5L1504,817.8L1505,820L1506,822.3L1507,824.5L1508,826.8L1509,829L1510,831.3L1511,833.4L1512,835.3L1513,837.1L1514,838.7L1515,840.1L1516,841.3L1517,842.4L1518,843.4L1519,844.4L1520,845.4L1521,846.4L1522,847.3L1523,848.1L1524,848.8L1525,849.5L1526,850.1L1527,850.6L1528,851.1L1529,851.6L1530,852.1L1531,852.6L1532,853.1L1533,853.6L1534,854.1L1535,854.6L1536,855.1L1537,855.6L1538,856.2L1539,856.9L1540,857.8L1541,858.9L1542,860.2L1543,861.6L1544,863.3L1545,865L1546,866.7L1547,868.4L1548,870.1L1549,871.9L1550,873.5L1551,875L1552,876.3L1553,877.4L1554,878.3L1555,879.1L1556,879.6L1557,880.1L1558,880.6L1559,881.1L1560,881.6L1561,882L1562,882.3L1563,882.4L1564,882.5L1565,882.3L1566,881.9L1567,881.4L1568,880.7L1569,880L1570,879.1L1571,878.2L1572,877.4L1573,876.5L1574,875.6L1575,874.7L1576,873.9L1577,873.1L1578,872.3L1579,871.6L1580,870.9L1581,870.2L1582,869.5L1583,868.8L1584,868.1L1585,867.4L1586,866.7L1587,866.1L1588,865.4L1589,864.7L1590,864L1591,863.3L1592,862.6L1593,861.9L1594,861.3L1595,860.6L1596,859.9L1597,859.2L1598,858.5L1599,857.8L1600,857.2L1601,856.5L1602,855.8L1603,855.3L1604,854.8L1605,854.5L1606,854.3L1607,854.1L1608,854.1L1609,854.2L1610,854.2L1611,854.2L1612,854.3L1613,854.3L1614,854.3L1615,854.4L1616,854.4L1617,854.5L1618,854.5L1619,854.5L1620,854.6L1621,854.6L1622,854.6L1623,854.7L1624,854.7L1625,854.7L1626,854.8L1627,854.8L1628,854.9L1629,854.9L1630,855.2L1631,855.8L1632,856.7L1633,857.8L1634,859.1L1635,860.5L1636,862.1L1637,863.6L1638,864.2L1639,863.7L1640,862.2L1641,859.7L1642,856.3L1643,852.4L1644,848.3L1645,844.8L1646,842.1L1647,840.2L1648,839.1L1649,838.7L1650,838.7L1651,838.7L1652,838.7L1653,838.7L1654,838.7L1655,838.7L1656,838.7L1657,838.7L1658,838.7L1659,838.7L1660,838.7L1661,838.8L1662,839L1663,839.2L1664,839.6L1665,840.1L1666,840.7L1667,841.5L1668,842.2L1669,843.2L1670,844.5L1671,846L1672,847.8L1673,850L1674,852.3L1675,855L1676,857.7L1677,860.4L1678,862.9L1679,865L1680,866.9L1681,868.4L1682,869.7L1683,870.6L1684,871.2L1685,871.7L1686,872.2L1687,872.7L1688,873.2L1689,873.6L1690,874L1691,874.3L1692,874.5L1693,874.8L1694,874.9L1695,875L1696,875.1L1697,875.3L1698,875.5L1699,875.7L1700,875.8L1701,875.4L1702,874.6L1703,873.3L1704,871.7L1705,870L1706,868.2L1707,866.6L1708,865.4L1709,864.7L1710,864.3L1711,864.4L1712,864.4L1713,864.5L1714,864.5L1715,864.6L1716,864.6L1717,864.7L1718,864.7L1719,864.8L1720,864.8L1721,864.9L1722,864.9L1723,865L1724,865L1725,865.1L1726,865.1L1727,865.2L1728,865.3L1729,865.5L1730,865.9L1731,866L1732,865.8L1733,865.4L1734,864.7L1735,863.5L1736,862L1737,860.1L1738,858.2L1739,856.1L1740,854L1741,851.7L1742,849.4L1743,846.9L1744,844.4L1745,841.8L1746,839.1L1747,836.5L1748,833.9L1749,831.2L1750,828.6L1751,826L1752,823.4L1753,820.9L1754,818.6L1755,816.4L1756,814.3L1757,812.4L1758,810.6L1759,808.8L1760,807.1L1761,805.3L1762,803.6L1763,801.8L1764,800.1L1765,798.3L1766,796.6L1767,794.8L1768,793.1L1769,791.3L1770,789.6L1771,787.8L1772,786.1L1773,784.3L1774,782.6L1775,780.8L1776,779.1L1777,777.3L1778,775.6L1779,774.2L1780,773.1L1781,772.3L1782,771.8L1783,771.6L1784,771.8L1785,772.3L1786,772.9L1787,773.5L1788,774.1L1789,774.8L1790,775.5L1791,776.3L1792,777L1793,777.7L1794,778.4L1795,779.1L1796,779.8L1797,780.5L1798,781.2L1799,781.9L1800,782.7L1801,783.4L1802,784.1L1803,784.8L1804,785.5L1805,786.2L1806,786.9L1807,787.6L1808,788.3L1809,789L1810,789.4L1811,789.5L1812,789.5L1813,789.2L1814,788.7L1815,788L1816,787.1L1817,786L1818,784.7L1819,783.2L1820,781.4L1821,779.4L1822,777.2L1823,774.8L1824,772.3L1825,769.9L1826,767.4L1827,764.9L1828,762.5L1829,760L1830,757.5L1831,755.1L1832,752.6L1833,750.1L1834,747.7L1835,745.3L1836,743.2L1837,741.1L1838,740L1839,739L1840,738.1L1840,782 Z" fill="#0d47a1" fill-opacity="0.8"/>
<line x1="70" y1="653.5" x2="1840" y2="653.5" stroke="#b2b5be" stroke-width="2" stroke-dasharray="2 6"/>
<line x1="70" y1="705.5" x2="1840" y2="705.5" stroke="#787b86" stroke-width="1" stroke-dasharray="3 1"/>
<line x1="70" y1="859.5" x2="1840" y2="859.5" stroke="#787b86" stroke-width="1" stroke-dasharray="3 1"/>
<line x1="70" y1="782.5" x2="1840" y2="782.5" stroke="#9598a1" stroke-opacity="0.25" stroke-width="1"/>
<circle cx="78.7" cy="838.6" r="4.3" fill="#e5575b"/>
<circle cx="133.3" cy="887.3" r="4.3" fill="#0fd176"/>
<circle cx="219.5" cy="794.3" r="4.3" fill="#e5575b"/>
<circle cx="258.4" cy="845.4" r="4.3" fill="#0fd176"/>
<circle cx="298.6" cy="825" r="4.3" fill="#e5575b"/>
<circle cx="337.8" cy="872.7" r="4.3" fill="#0fd176"/>
<circle cx="399.1" cy="750" r="4.3" fill="#e5575b"/>
<circle cx="423.3" cy="759.5" r="4.3" fill="#0fd176"/>
<circle cx="454.3" cy="721" r="4.3" fill="#e5575b"/>
<circle cx="493.5" cy="764.6" r="4.3" fill="#0fd176"/>
<circle cx="517.7" cy="753.4" r="4.3" fill="#e5575b"/>
<circle cx="572.4" cy="849.5" r="4.3" fill="#0fd176"/>
<circle cx="587.7" cy="848.1" r="4.3" fill="#e5575b"/>
<circle cx="619.1" cy="864.8" r="4.3" fill="#0fd176"/>
<circle cx="666.1" cy="807.9" r="4.3" fill="#e5575b"/>
<circle cx="681.4" cy="800.4" r="4.3" fill="#0fd176"/>
<circle cx="728.1" cy="737.4" r="4.3" fill="#e5575b"/>
<circle cx="767.3" cy="764.6" r="4.3" fill="#0fd176"/>
<circle cx="805.8" cy="709.7" r="4.3" fill="#e5575b"/>
<circle cx="814.4" cy="707.4" r="4.3" fill="#0fd176"/>
<circle cx="838.2" cy="691.3" r="4.3" fill="#e5575b"/>
<circle cx="908.1" cy="794.3" r="4.3" fill="#0fd176"/>
<circle cx="916.6" cy="795.3" r="4.3" fill="#e5575b"/>
<circle cx="955.1" cy="840.6" r="4.3" fill="#0fd176"/>
<circle cx="985.8" cy="833.5" r="4.3" fill="#e5575b"/>
<circle cx="994" cy="830.4" r="4.3" fill="#0fd176"/>
<circle cx="1026.4" cy="802.1" r="4.3" fill="#e5575b"/>
<circle cx="1072.8" cy="882.9" r="4.3" fill="#0fd176"/>
<circle cx="1167.2" cy="730.2" r="4.3" fill="#e5575b"/>
<circle cx="1190.4" cy="740.8" r="4.3" fill="#0fd176"/>
<circle cx="1214.3" cy="736.3" r="4.3" fill="#e5575b"/>
<circle cx="1221.1" cy="736.3" r="4.3" fill="#0fd176"/>
<circle cx="1229.6" cy="743.8" r="4.3" fill="#e5575b"/>
<circle cx="1292" cy="827.3" r="4.3" fill="#0fd176"/>
<circle cx="1370.4" cy="704" r="4.3" fill="#e5575b"/>
<circle cx="1480.1" cy="810.6" r="4.3" fill="#0fd176"/>
<circle cx="1488.6" cy="807.9" r="4.3" fill="#e5575b"/>
<circle cx="1566.4" cy="882.3" r="4.3" fill="#0fd176"/>
<circle cx="1620.9" cy="855" r="4.3" fill="#e5575b"/>
<circle cx="1636.3" cy="863.2" r="4.3" fill="#0fd176"/>
<circle cx="1660.1" cy="844.5" r="4.3" fill="#e5575b"/>
<circle cx="1699" cy="875.5" r="4.3" fill="#0fd176"/>
<circle cx="1722.2" cy="867.6" r="4.3" fill="#e5575b"/>
<circle cx="1730" cy="865.3" r="4.3" fill="#0fd176"/>
<circle cx="1785.3" cy="772.2" r="4.3" fill="#e5575b"/>
<circle cx="1808.1" cy="784.4" r="4.3" fill="#0fd176"/>
<text x="637" y="347" fill="#f7e45a" font-size="16" font-weight="bold" text-anchor="start">4.6% gain on long</text>
<text x="1177" y="316" fill="#eb5449" font-size="16.4" font-weight="normal" text-anchor="start">4.9% gain</text>
<text x="1177" y="333" fill="#eb5449" font-size="16.4" font-weight="normal" text-anchor="start">on short</text>
<text x="1327" y="306" fill="#24bbd6" font-size="16.5" font-weight="normal" text-anchor="start">13% gain on long</text>
<text x="410" y="634" fill="#f7e45a" font-size="16" font-weight="bold" text-anchor="start">Trade 1</text>
<text x="332" y="686" fill="#f7e45a" font-size="16.2" font-weight="bold" text-anchor="start">Gap Between Waves</text>
<text x="277.5" y="924.5" fill="#f7e45a" font-size="16" font-weight="bold" text-anchor="start">Wave 1</text>
<text x="528.8" y="913.3" fill="#f7e45a" font-size="16" font-weight="bold" text-anchor="start">Wave 2</text>
<text x="808" y="650" fill="#eb5449" font-size="16" font-weight="normal" text-anchor="start">Wave 1</text>
<text x="1013" y="737" fill="#eb5449" font-size="16" font-weight="normal" text-anchor="start">Wave 2</text>
<text x="715" y="892" fill="#eb5449" font-size="16.9" font-weight="normal" text-anchor="start">Gap Between Waves</text>
<text x="1036" y="698" fill="#24bbd6" font-size="16.9" font-weight="normal" text-anchor="start">Gap Between Waves</text>
<text x="997.3" y="928.6" fill="#24bbd6" font-size="16" font-weight="normal" text-anchor="start">Wave 1</text>
<text x="1295.5" y="890.2" fill="#24bbd6" font-size="16" font-weight="normal" text-anchor="start">Wave 2</text>
<line x1="1841" y1="202.5" x2="1846" y2="202.5" stroke="#787b86"/>
<text x="1852" y="207.0" fill="#d1d4dc" font-size="13.2" font-weight="normal" text-anchor="start" stroke="#d1d4dc" stroke-width="0.25">48000.00</text>
<line x1="1841" y1="485.5" x2="1846" y2="485.5" stroke="#787b86"/>
<text x="1852" y="490.0" fill="#d1d4dc" font-size="13.2" font-weight="normal" text-anchor="start" stroke="#d1d4dc" stroke-width="0.25">32000.00</text>
<line x1="1841" y1="521.5" x2="1846" y2="521.5" stroke="#787b86"/>
<text x="1852" y="526.0" fill="#d1d4dc" font-size="13.2" font-weight="normal" text-anchor="start" stroke="#d1d4dc" stroke-width="0.25">30400.00</text>
<line x1="1841" y1="559.5" x2="1846" y2="559.5" stroke="#787b86"/>
<text x="1852" y="564.0" fill="#d1d4dc" font-size="13.2" font-weight="normal" text-anchor="start" stroke="#d1d4dc" stroke-width="0.25">28800.00</text>
<line x1="1841" y1="628.5" x2="1846" y2="628.5" stroke="#787b86"/>
<text x="1852" y="633.0" fill="#d1d4dc" font-size="13.2" font-weight="normal" text-anchor="start" stroke="#d1d4dc" stroke-width="0.25">120.00</text>
<line x1="1841" y1="679.5" x2="1846" y2="679.5" stroke="#787b86"/>
<text x="1852" y="684.0" fill="#d1d4dc" font-size="13.2" font-weight="normal" text-anchor="start" stroke="#d1d4dc" stroke-width="0.25">80.00</text>
<line x1="1841" y1="730.5" x2="1846" y2="730.5" stroke="#787b86"/>
<text x="1852" y="735.0" fill="#d1d4dc" font-size="13.2" font-weight="normal" text-anchor="start" stroke="#d1d4dc" stroke-width="0.25">40.00</text>
<line x1="1841" y1="781.5" x2="1846" y2="781.5" stroke="#787b86"/>
<text x="1852" y="786.0" fill="#d1d4dc" font-size="13.2" font-weight="normal" text-anchor="start" stroke="#d1d4dc" stroke-width="0.25">0.00</text>
<line x1="1841" y1="833.5" x2="1846" y2="833.5" stroke="#787b86"/>
<text x="1852" y="838.0" fill="#d1d4dc" font-size="13.2" font-weight="normal" text-anchor="start" stroke="#d1d4dc" stroke-width="0.25">−40.00</text>
<line x1="1841" y1="884.5" x2="1846" y2="884.5" stroke="#787b86"/>
<text x="1852" y="889.0" fill="#d1d4dc" font-size="13.2" font-weight="normal" text-anchor="start" stroke="#d1d4dc" stroke-width="0.25">−80.00</text>
<line x1="1841" y1="936.5" x2="1846" y2="936.5" stroke="#787b86"/>
<text x="1852" y="941.0" fill="#d1d4dc" font-size="13.2" font-weight="normal" text-anchor="start" stroke="#d1d4dc" stroke-width="0.25">−120.00</text>
<rect x="1841" y="258.5" width="73" height="18.5" rx="1.5" fill="#0c9c89"/>
<line x1="1841" y1="267.5" x2="1846" y2="267.5" stroke="#fff" stroke-width="1"/>
<text x="1852" y="272.5" fill="#ffffff" font-size="13" font-weight="normal" text-anchor="start">40580.00</text>
<rect x="1841" y="277.9" width="73" height="18.5" rx="1.5" fill="#f0513c"/>
<line x1="1841" y1="286.9" x2="1846" y2="286.9" stroke="#fff" stroke-width="1"/>
<text x="1852" y="291.9" fill="#ffffff" font-size="13" font-weight="normal" text-anchor="start">37927.81</text>
<rect x="1841" y="297.4" width="73" height="18.5" rx="1.5" fill="#787b86"/>
<line x1="1841" y1="306.4" x2="1846" y2="306.4" stroke="#fff" stroke-width="1"/>
<text x="1852" y="311.4" fill="#ffffff" font-size="13" font-weight="normal" text-anchor="start">36675.72</text>
<rect x="1841" y="316.9" width="73" height="18.5" rx="1.5" fill="#0c9c89"/>
<line x1="1841" y1="325.9" x2="1846" y2="325.9" stroke="#fff" stroke-width="1"/>
<text x="1852" y="330.9" fill="#ffffff" font-size="13" font-weight="normal" text-anchor="start">36232.09</text>
<rect x="1841" y="336.3" width="73" height="18.5" rx="1.5" fill="#787b86"/>
<line x1="1841" y1="345.3" x2="1846" y2="345.3" stroke="#fff" stroke-width="1"/>
<text x="1852" y="350.3" fill="#ffffff" font-size="13" font-weight="normal" text-anchor="start">35904.02</text>
<rect x="1841" y="355.8" width="73" height="18.5" rx="1.5" fill="#22a393"/>
<line x1="1841" y1="364.8" x2="1846" y2="364.8" stroke="#fff" stroke-width="1"/>
<text x="1852" y="369.8" fill="#ffffff" font-size="13" font-weight="normal" text-anchor="start">35052.07</text>
<rect x="1841" y="375.2" width="73" height="18.5" rx="1.5" fill="#0c9c89"/>
<line x1="1841" y1="384.2" x2="1846" y2="384.2" stroke="#fff" stroke-width="1"/>
<text x="1852" y="389.2" fill="#ffffff" font-size="13" font-weight="normal" text-anchor="start">34867.81</text>
<rect x="1841" y="394.6" width="73" height="18.5" rx="1.5" fill="#f0513c"/>
<line x1="1841" y1="403.6" x2="1846" y2="403.6" stroke="#fff" stroke-width="1"/>
<text x="1852" y="408.6" fill="#ffffff" font-size="13" font-weight="normal" text-anchor="start">34681.79</text>
<rect x="1841" y="414.1" width="73" height="18.5" rx="1.5" fill="#787b86"/>
<line x1="1841" y1="423.1" x2="1846" y2="423.1" stroke="#fff" stroke-width="1"/>
<text x="1852" y="428.1" fill="#ffffff" font-size="13" font-weight="normal" text-anchor="start">34631.73</text>
<rect x="1841" y="433.5" width="73" height="18.5" rx="1.5" fill="#22a393"/>
<line x1="1841" y1="442.5" x2="1846" y2="442.5" stroke="#fff" stroke-width="1"/>
<text x="1852" y="447.5" fill="#ffffff" font-size="13" font-weight="normal" text-anchor="start">34049.55</text>
<rect x="1841" y="453" width="73" height="18.5" rx="1.5" fill="#f0513c"/>
<line x1="1841" y1="462" x2="1846" y2="462" stroke="#fff" stroke-width="1"/>
<text x="1852" y="467" fill="#ffffff" font-size="13" font-weight="normal" text-anchor="start">33768.87</text>
<line x1="110.5" y1="949" x2="110.5" y2="954" stroke="#5d606b"/>
<text x="110.5" y="970" fill="#d1d4dc" font-size="14" font-weight="normal" text-anchor="middle" stroke="#d1d4dc" stroke-width="0.4">19</text>
<line x1="204.5" y1="949" x2="204.5" y2="954" stroke="#5d606b"/>
<text x="204.5" y="970" fill="#d1d4dc" font-size="14" font-weight="normal" text-anchor="middle" stroke="#d1d4dc" stroke-width="0.4">21</text>
<line x1="298.5" y1="949" x2="298.5" y2="954" stroke="#5d606b"/>
<text x="298.5" y="970" fill="#d1d4dc" font-size="14" font-weight="normal" text-anchor="middle" stroke="#d1d4dc" stroke-width="0.4">23</text>
<line x1="392.5" y1="949" x2="392.5" y2="954" stroke="#5d606b"/>
<text x="392.5" y="970" fill="#d1d4dc" font-size="14" font-weight="normal" text-anchor="middle" stroke="#d1d4dc" stroke-width="0.4">25</text>
<line x1="485.5" y1="949" x2="485.5" y2="954" stroke="#5d606b"/>
<text x="485.5" y="970" fill="#d1d4dc" font-size="14" font-weight="normal" text-anchor="middle" stroke="#d1d4dc" stroke-width="0.4">27</text>
<line x1="814.5" y1="949" x2="814.5" y2="954" stroke="#5d606b"/>
<text x="814.5" y="970" fill="#d1d4dc" font-size="14" font-weight="normal" text-anchor="middle" stroke="#d1d4dc" stroke-width="0.4">3</text>
<line x1="908.5" y1="949" x2="908.5" y2="954" stroke="#5d606b"/>
<text x="908.5" y="970" fill="#d1d4dc" font-size="14" font-weight="normal" text-anchor="middle" stroke="#d1d4dc" stroke-width="0.4">5</text>
<line x1="1002.5" y1="949" x2="1002.5" y2="954" stroke="#5d606b"/>
<text x="1002.5" y="970" fill="#d1d4dc" font-size="14" font-weight="normal" text-anchor="middle" stroke="#d1d4dc" stroke-width="0.4">7</text>
<line x1="1378.5" y1="949" x2="1378.5" y2="954" stroke="#5d606b"/>
<text x="1378.5" y="970" fill="#d1d4dc" font-size="14" font-weight="normal" text-anchor="middle" stroke="#d1d4dc" stroke-width="0.4">15</text>
<line x1="1472.5" y1="949" x2="1472.5" y2="954" stroke="#5d606b"/>
<text x="1472.5" y="970" fill="#d1d4dc" font-size="14" font-weight="normal" text-anchor="middle" stroke="#d1d4dc" stroke-width="0.4">17</text>
<line x1="1566.5" y1="949" x2="1566.5" y2="954" stroke="#5d606b"/>
<text x="1566.5" y="970" fill="#d1d4dc" font-size="14" font-weight="normal" text-anchor="middle" stroke="#d1d4dc" stroke-width="0.4">19</text>
<line x1="1660.5" y1="949" x2="1660.5" y2="954" stroke="#5d606b"/>
<text x="1660.5" y="970" fill="#d1d4dc" font-size="14" font-weight="normal" text-anchor="middle" stroke="#d1d4dc" stroke-width="0.4">21</text>
<line x1="1754.5" y1="949" x2="1754.5" y2="954" stroke="#5d606b"/>
<text x="1754.5" y="970" fill="#d1d4dc" font-size="14" font-weight="normal" text-anchor="middle" stroke="#d1d4dc" stroke-width="0.4">23</text>
<text x="720" y="970" fill="#d1d4dc" font-size="13" font-weight="bold" text-anchor="middle">Jun</text>
<rect x="553" y="948" width="130" height="29" rx="2" fill="#4caf50"/>
<text x="618" y="970" fill="#ffffff" font-size="13.5" font-weight="normal" text-anchor="middle" stroke="#ffffff" stroke-width="0.4">29 May ’21 &#160;&#160;20:00</text>
<rect x="1094" y="948" width="128" height="29" rx="2" fill="#f44336"/>
<text x="1158" y="970" fill="#ffffff" font-size="13.5" font-weight="normal" text-anchor="middle" stroke="#ffffff" stroke-width="0.4">10 Jun ’21 &#160;&#160;08:00</text>
<rect x="1228" y="948" width="128" height="29" rx="2" fill="#00bcd4"/>
<text x="1292" y="970" fill="#131722" font-size="13.5" font-weight="normal" text-anchor="middle" stroke="#131722" stroke-width="0.3">13 Jun ’21 &#160;&#160;04:00</text>
</g>
</svg>

<!-- legend -->
<div class="a" style="left:81px;top:207px;font-size:18.5px;color:#d1d4dc;line-height:21px">BTC/USDT <span style="color:#787b86">&#183;</span> 4h <span style="color:#787b86">&#183;</span> Binance</div>
<div class="a" style="left:313px;top:206px;width:22px;height:22px;border-radius:11px;background:#1e3a3c"></div>
<div class="a" style="left:319px;top:212px;width:10px;height:10px;border-radius:5px;background:#0fa38d"></div>
<div class="a" style="left:82px;top:234px;width:38px;height:27px;border:1px solid #2a2e39;border-radius:4px;background:#131722"></div>
<svg class="a" style="left:88px;top:242px" width="12" height="10"><path d="M1,2l5,5l5,-5" stroke="#d1d4dc" stroke-width="1.6" fill="none"/></svg>
<div class="a" style="left:105px;top:238px;font-size:15px;color:#d1d4dc;line-height:18px">6</div>
<!-- round buttons -->
<div class="a" style="left:80px;top:841px;width:39px;height:39px;border-radius:20px;background:#2a2e39;border:1px solid #1e3a5a"></div>
<svg class="a" style="left:86px;top:853px" width="28" height="16" viewBox="0 0 28 16"><path d="M11,2.5h-4.5a5.5,5.5 0 0 0 0,11h4.5M16.5,2.5h4.5a5.5,5.5 0 0 1 0,11h-4.5M9.5,8h9" stroke="#fff" stroke-width="2.6" fill="none"/></svg>
<div class="a" style="left:80px;top:899px;width:39px;height:39px;border-radius:20px;background:#2a2e39"></div>
<svg class="a" style="left:85px;top:908px" width="30" height="20" viewBox="0 0 30 20"><path d="M2,18.5C0.5,14 3,11 7,11.5C8,6 13,2 18,5.5C22,3.5 27.5,6 27,11.5C29.5,12.5 29.5,18.5 26.5,18.5Z" fill="#3aa6ec"/><path d="M1.5,17.5L9.5,10.5L15.5,15.5L27.5,6" stroke="#2a2e39" stroke-width="1.8" fill="none"/><circle cx="9.5" cy="10.5" r="1.8" fill="#2a2e39"/><circle cx="15.5" cy="15.5" r="1.8" fill="#2a2e39"/></svg>
<div class="a" style="left:1784px;top:906px;width:36px;height:36px;border-radius:18px;background:#1e222d"></div>
<svg class="a" style="left:1793px;top:915px" width="18" height="18" viewBox="0 0 18 18"><path d="M3,3l6,6l-6,6M9,3l6,6l-6,6" stroke="#b2b5be" stroke-width="1.8" fill="none"/></svg>
<!-- axis settings -->
<svg class="a" style="left:1869px;top:954px" width="22" height="22" viewBox="-11 -11 22 22"><circle r="6.5" fill="none" stroke="#787b86" stroke-width="1.5"/><g stroke="#787b86" stroke-width="1.5"><path d="M0,-10v3M0,7v3M-10,0h3M7,0h3M-7,-7l2,2M5,5l2,2M7,-7l-2,2M-5,5l-2,2"/></g></svg>
<div class="a" style="left:58px;top:928px;width:10px;height:28px;border:1px solid #2a2e39;border-radius:5px;background:#131722"></div>
<svg class="a" style="left:59px;top:936px" width="8" height="12"><path d="M6,1l-4,5l4,5" stroke="#b2b5be" stroke-width="1.2" fill="none"/></svg>

<!-- sidebar icons -->
<svg class="a" style="left:0;top:148px" width="65" height="852" viewBox="0 148 65 852">
 <g stroke="#2d67b5" stroke-width="2"><path d="M33,164.7v9.7M33,183.4v10.1M19,179h9.7M37.3,179h10.5"/></g>
 <g stroke="#868993" stroke-width="1.5" fill="none">
  <path d="M33,211v10.3M33,226.7v10.3"/><circle cx="33" cy="224" r="2.7"/>
  <path d="M23.3,264l9.1,-9M39.5,261.6L23.4,277.7M23.3,267.4L34,277.8M37.4,277.8L45.6,269.6"/><circle cx="21.6" cy="265.7" r="2.4"/><circle cx="21.6" cy="279.5" r="2.4"/><circle cx="35.7" cy="279.5" r="2.4"/>
  <path d="M17.5,324.5C20,318 23,312.5 28,311.5C33,310.5 37,313 36.5,316.5C35.5,321 32,323.5 27,324.3z M35.7,306.3C35,309 36.5,312.5 39.8,311.5L48.9,303.8"/>
  <path d="M25,351.5v-3h16v3M33.2,348.5v21M29.9,369.5h6.6"/>
  <path d="M25.4,392L21.6,413.9M25.4,392L30.7,401.5L40.6,393.7L44.4,410.3M30.7,401.5L44.4,410.3M30.7,401.5L21.6,413.9"/><circle cx="25.4" cy="392" r="2.4" fill="#131722"/><circle cx="40.6" cy="393.7" r="2.4" fill="#131722"/><circle cx="30.7" cy="401.5" r="2.4" fill="#131722"/><circle cx="21.6" cy="413.9" r="2.4" fill="#131722"/><circle cx="44.4" cy="410.3" r="2.4" fill="#131722"/>
  <path d="M23.2,439h21.6M23.2,451.5h17M23.2,459h21.6"/><path d="M26.1,449L42.3,441.6" stroke-dasharray="2 3"/><circle cx="20.3" cy="439" r="2.7"/><circle cx="20.3" cy="451.5" r="2.7"/><circle cx="43.1" cy="451.5" r="2.7"/><circle cx="20.3" cy="459" r="2.7"/>
  <path d="M17.9,562.3L40.6,539.6L47.3,546.2L24.5,568.9Z M22.5,557.7l3,3M26.5,553.7l2,2M30.5,549.7l3,3M34.5,545.7l2,2M38.5,541.7l3,3"/>
  <circle cx="30.7" cy="597.5" r="10"/><path d="M38.1,605L42.7,609.5M30.7,593v9M26.1,597.5h9.2"/>
  <path d="M22.8,671.5V657.5A10,10 0 0 1 42.4,657.5V671.5H36V657.5A3.1,3.1 0 0 0 29.4,657.5V671.5Z M22.8,666.9h6.6M36,666.9h6.4"/>
  <path d="M19.1,711.2L21,705L35,691L39.5,695.5L25.5,709.5Z M21,705L25.5,709.5M23.5,702.5L37,689"/><rect x="34.2" y="709.5" width="10.4" height="8.2" rx="0.8"/><path d="M36.5,709.5v-3a2.8,2.8 0 0 1 5.5,-0.8"/>
  <rect x="22.8" y="748.6" width="19.5" height="14.1" rx="2"/><path d="M27.8,748.6v-5a4.6,4.6 0 0 1 9.1,-1"/><path d="M32.3,754v3.5" stroke-width="2"/>
  <path d="M19.5,790.4C23,784.5 27,782.2 31.2,782.2C35.4,782.2 39.5,784.5 43,790.4C39.5,796.3 35.4,798.7 31.2,798.7C27,798.7 23,796.3 19.5,790.4Z"/><circle cx="31.2" cy="790.4" r="4.1"/><path d="M32.5,808.6C34,805 36.5,803 39,803.5C38.5,806 36,808.3 32.5,808.6Z M40,803.5c0.5,2 2,2.3 3.5,1.3l3,-2.5" stroke-width="1.3"/>
  <path d="M21.2,849.6h22.5M27.7,849.6v-2.3a2,2 0 0 1 2,-2h5.7a2,2 0 0 1 2,2v2.3M24.2,849.6v16.6a2.5,2.5 0 0 0 2.5,2.5h11.7a2.5,2.5 0 0 0 2.5,-2.5v-16.6M29.4,853.6v10.3M35.5,853.6v10.3"/>
  <path d="M32.5,970.3L43.9,979.5L32.5,988.6L20.9,979.5Z M23,984.5L32.5,992L42,984.5M23,988.5L32.5,996L42,988.5"/>
 </g>
 <path d="M33.5,484.5L24.7,493.3L33.5,502.1M24.7,493.3H41" stroke="#868993" stroke-width="5" stroke-linecap="round" stroke-linejoin="round" fill="none"/>
 <path d="M0,523.5h64M0,628.5h64M0,826.5h64" stroke="#2a2e39" stroke-width="1"/>
</svg>

<!-- bottom bar -->
<div id="bot" class="a"></div>
<svg class="a" style="left:8px;top:1009px" width="16" height="16" viewBox="0 0 16 16"><rect x="1" y="1" width="14" height="14" rx="1" stroke="#fff" stroke-width="1.6" fill="none"/><path d="M4,5h1M7,5h6M4,8h1M7,8h6M4,11h1M7,11h6" stroke="#fff" stroke-width="1.6"/></svg>
<div class="a" style="left:32px;top:1006px;font-size:19.5px;font-weight:bold;color:#fff;line-height:22px">Open Orders</div>
<div class="a" style="left:160px;top:1002px;width:1px;height:25px;background:#2d4a6a"></div>
<svg class="a" style="left:172px;top:1010px" width="20" height="12" viewBox="0 0 20 12"><path d="M1,11l6,-6l4,4l7,-7M13,2h5v5" stroke="#fff" stroke-width="2" fill="none"/></svg>
<div class="a" style="left:197px;top:1006px;font-size:19.5px;font-weight:bold;color:#fff;line-height:22px">Market Cap</div>
<div class="a" style="left:313px;top:1002px;width:1px;height:25px;background:#2d4a6a"></div>
<svg class="a" style="left:326px;top:1010px" width="18" height="14" viewBox="0 0 18 14"><path d="M1,9h16v4h-16z" fill="#fff"/><path d="M2,7l14,-5M4,6l10,-3" stroke="#fff" stroke-width="1.8"/></svg>
<div class="a" style="left:351px;top:1006px;font-size:19.5px;font-weight:bold;color:#fff;line-height:22px">Scanner</div>
<div class="a" style="left:1665px;top:1002px;width:206px;height:25px;background:#1ebd14;border-radius:5px 5px 0 0"></div>
<div class="a" style="left:1671px;top:1010px;font-size:13.9px;font-weight:bold;color:#f4fff0;line-height:16px">Swap Crypto Via ChangeNow</div>
<svg class="a" style="left:1888px;top:1009px" width="14" height="16"><path d="M3,1l7,7l-7,7" stroke="#fff" stroke-width="2.4" fill="none"/></svg>
</body></html>
